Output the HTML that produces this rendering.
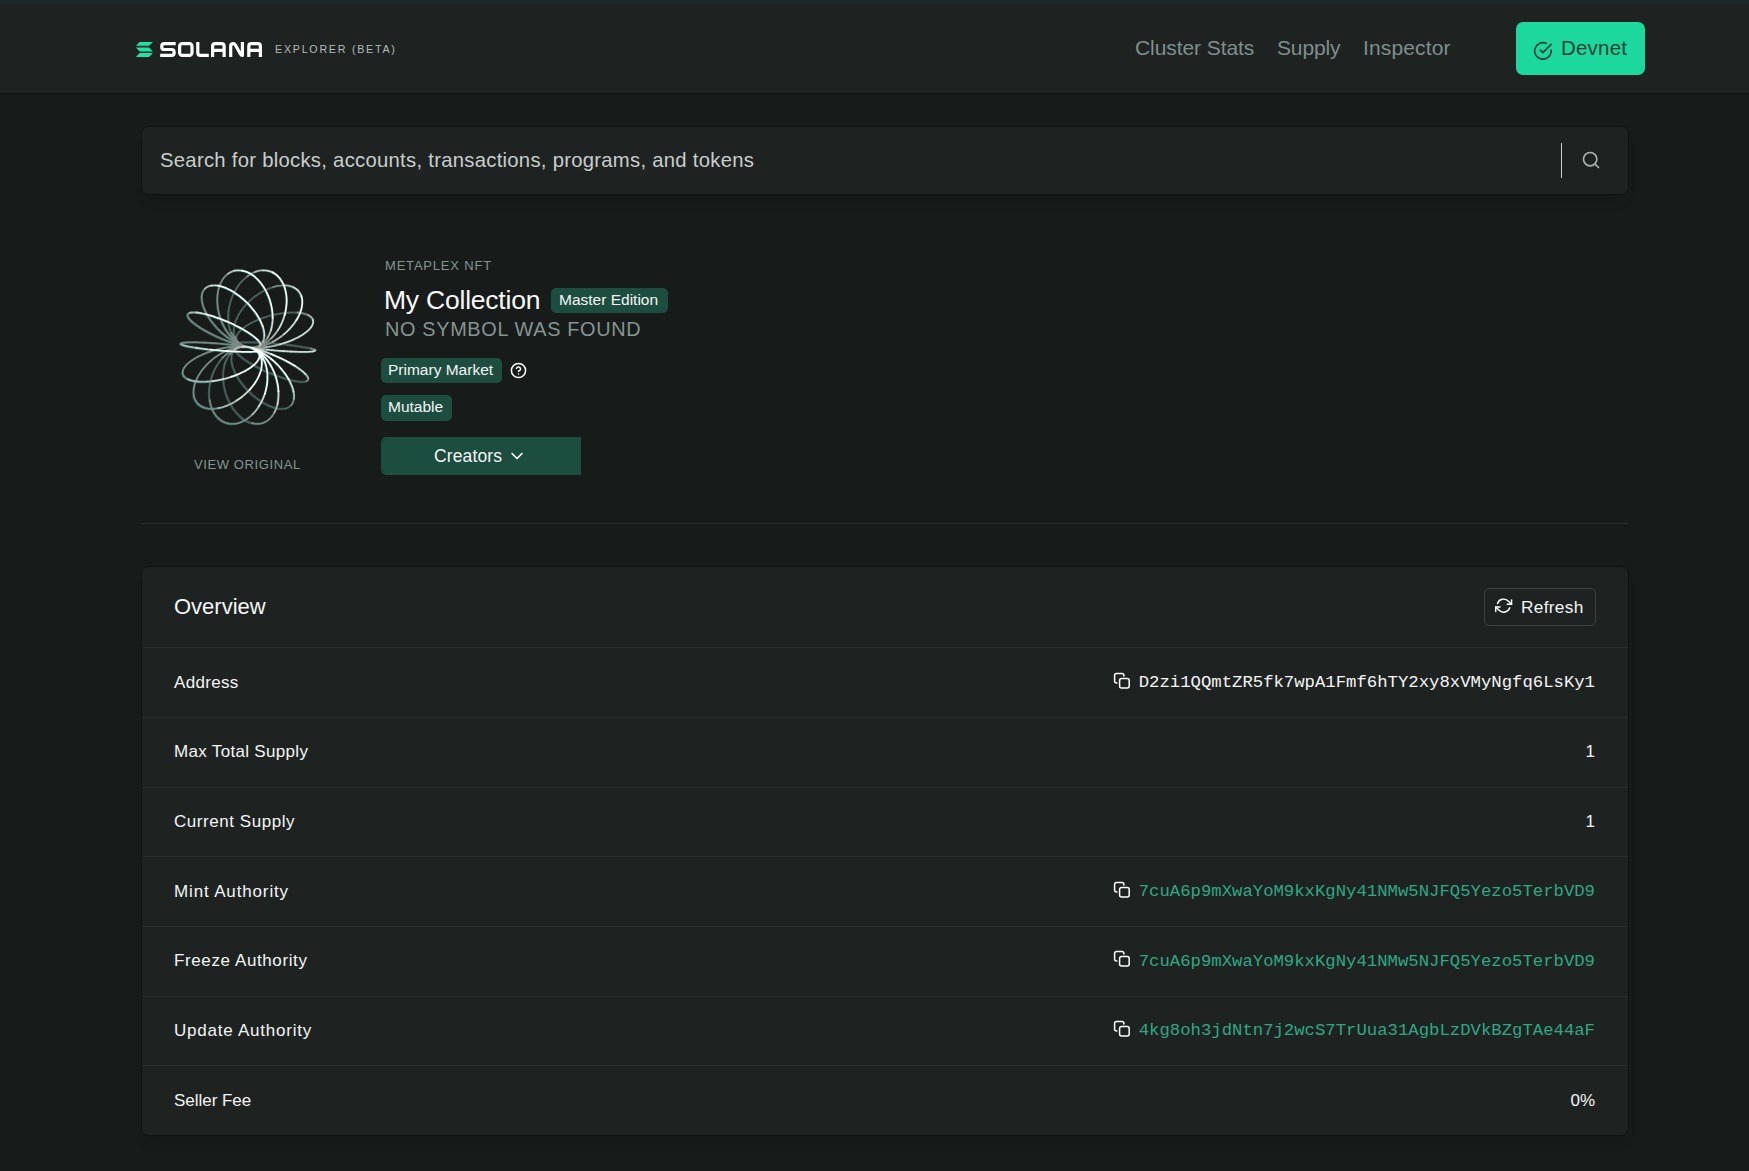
<!DOCTYPE html>
<html>
<head>
<meta charset="utf-8">
<style>
*{margin:0;padding:0;box-sizing:border-box}
html,body{width:1749px;height:1171px;overflow:hidden}
body{background:#171b1a;font-family:"Liberation Sans",sans-serif;color:#f4f5f4;position:relative}
.abs{position:absolute;white-space:nowrap;line-height:1}
#hdr{position:absolute;left:0;top:0;width:1749px;height:94px;background:#1e2322;border-bottom:1px solid #111413}
.nav{font-size:21px;color:#7f8f8b}
#devnet{position:absolute;left:1516px;top:22px;width:129px;height:53px;background:#1dd89c;border-radius:7px}
#search{position:absolute;left:141px;top:126px;width:1488px;height:69px;background:#1e2322;border:1px solid #101312;border-radius:7px;box-shadow:0 10px 14px -6px rgba(0,0,0,0.12)}
.muted{color:#859490}
.badge{position:absolute;background:#1c4d3f;border-radius:5px}
#card{position:absolute;left:141px;top:566px;width:1488px;height:570px;background:#1e2322;border:1px solid #101312;border-radius:8px;box-shadow:0 10px 14px -6px rgba(0,0,0,0.12)}
.rowb{position:absolute;left:142px;width:1486px;height:1px;background:#282e2c}
.lbl{font-size:17.5px;color:#f4f5f4}
.lbl2{font-size:17px}
.mono{font-family:"Liberation Mono",monospace;font-size:17.3px}
.grn{color:#2fa882}
</style>
</head>
<body>
<div id="hdr"></div>
<div class="abs" style="left:0;top:0;width:1749px;height:4px;background:#21282a"></div>
<!-- logo -->
<svg class="abs" style="left:130px;top:36px" width="140" height="26" viewBox="130 36 140 26">
  <g fill="#1ee3a2">
    <polygon points="139.7,41.9 152.9,41.9 149.1,45.8 135.9,45.8"/>
    <polygon points="135.9,47.4 149.1,47.4 152.9,51.6 139.7,51.6"/>
    <polygon points="139.7,52.9 152.9,52.9 149.1,57 135.9,57"/>
  </g>
  <g fill="none" stroke="#ffffff" stroke-width="3.2" stroke-linejoin="round">
    <!-- S -->
    <path d="M175.7,43.6 H164.3 Q161.8,43.6 161.8,46.1 V47.2 Q161.8,49.5 164.3,49.5 H171.6 Q174.1,49.5 174.1,52 V53 Q174.1,55.4 171.6,55.4 H160.2"/>
    <!-- O -->
    <rect x="179.6" y="43.6" width="12.4" height="11.8" rx="2.6"/>
    <!-- L -->
    <path d="M197.8,42 V52.8 Q197.8,55.4 200.4,55.4 H208.8"/>
    <!-- A -->
    <path d="M212.6,57 V46.2 Q212.6,43.6 215.2,43.6 H221.5 Q224.1,43.6 224.1,46.2 V57 M212.6,50.4 H224.1"/>
    <!-- N -->
    <path d="M230.7,57 V46.2 Q230.7,43.6 233.2,43.6 Q234.6,43.6 235.4,45 L240.4,54 Q241.2,55.4 242.4,55.4 V42"/>
    <!-- A -->
    <path d="M248.8,57 V46.2 Q248.8,43.6 251.4,43.6 H257.8 Q260.4,43.6 260.4,46.2 V57 M248.8,50.4 H260.4"/>
  </g>
</svg>
<div class="abs" style="left:275px;top:44px;font-size:10.7px;letter-spacing:1.75px;color:#b3bcb8">EXPLORER (BETA)</div>

<div class="abs nav" style="left:1135px;top:37px;letter-spacing:-0.08px">Cluster Stats</div>
<div class="abs nav" style="left:1277px;top:37px;letter-spacing:-0.15px">Supply</div>
<div class="abs nav" style="left:1363px;top:37px;letter-spacing:0.15px">Inspector</div>
<div id="devnet"></div>
<svg class="abs" style="left:1533.2px;top:40.6px" width="19.8" height="19.8" viewBox="0 0 24 24" fill="none" stroke="#1c3f35" stroke-width="2" stroke-linecap="round" stroke-linejoin="round"><path d="M22 11.08V12a10 10 0 1 1-5.93-9.14"/><polyline points="22 4 12 14.01 9 11.01"/></svg>
<div class="abs" style="left:1561px;top:37.6px;font-size:20.5px;letter-spacing:0.2px;color:#1c3f35">Devnet</div>

<!-- search -->
<div id="search"></div>
<div class="abs" style="left:160px;top:149.8px;font-size:20.3px;letter-spacing:0.27px;color:#c9cdcb">Search for blocks, accounts, transactions, programs, and tokens</div>
<div class="abs" style="left:1561px;top:143px;width:1px;height:35px;background:#c9cdcb"></div>
<svg class="abs" style="left:1581px;top:150px" width="20" height="20" viewBox="0 0 24 24" fill="none" stroke="#a9b1ad" stroke-width="2" stroke-linecap="round" stroke-linejoin="round"><circle cx="11" cy="11" r="8"/><line x1="21" y1="21" x2="16.65" y2="16.65"/></svg>

<!-- NFT header -->
<svg id="nftimg" class="abs" style="left:170px;top:260px" width="160" height="175" viewBox="0 0 160 175"><g fill="none" stroke-linecap="round"><path stroke="#26a08c" stroke-opacity="0.27" stroke-width="1.5" transform="translate(-0.7,0.7)" d="M93.8 82.6L96.4 82.8M96.4 82.8L99.1 83.0M99.1 83.0L101.8 83.2M101.8 83.2L104.5 83.4M104.5 83.4L107.3 83.6M107.3 83.6L110.0 83.9M110.0 83.9L112.7 84.1M112.7 84.1L115.4 84.4M115.4 84.4L118.1 84.7"/><path stroke="#26a08c" stroke-opacity="0.40" stroke-width="1.5" transform="translate(-0.7,0.7)" d="M97.5 115.4L97.3 112.8M97.3 112.8L97.0 110.3M97.0 110.3L96.6 107.9M96.6 107.9L96.0 105.5M96.0 105.5L95.3 103.2M95.3 103.2L94.4 101.1M94.4 101.1L93.4 99.1M93.4 99.1L92.3 97.1M92.3 97.1L91.1 95.4M91.1 95.4L89.8 93.8M89.8 93.8L88.4 92.3M88.4 92.3L86.8 91.0M86.8 91.0L85.2 89.8M85.2 89.8L83.5 88.8M83.5 88.8L81.7 88.0M81.7 88.0L79.9 87.4M79.9 87.4L78.0 87.0M78.0 87.0L76.1 86.8M107.5 123.4L106.9 120.7M106.9 120.7L106.2 118.0M106.2 118.0L105.3 115.4M105.3 115.4L104.4 112.8M104.4 112.8L103.3 110.3M103.3 110.3L102.1 107.9M102.1 107.9L100.8 105.5M100.8 105.5L99.4 103.2M99.4 103.2L97.9 101.1M97.9 101.1L96.4 99.1M96.4 99.1L94.7 97.1M94.7 97.1L93.0 95.4M93.0 95.4L91.3 93.8M91.3 93.8L89.4 92.3M89.4 92.3L87.6 91.0M87.6 91.0L85.7 89.8M85.7 89.8L83.8 88.8M83.8 88.8L81.9 88.0M81.9 88.0L79.9 87.4M79.9 87.4L78.0 87.0M78.0 87.0L76.1 86.8M76.1 86.8L74.2 86.7M74.2 86.7L72.3 86.8M54.9 104.1L54.3 106.4M54.3 106.4L53.9 108.8M53.9 108.8L53.5 111.3M53.5 111.3L53.3 113.8M53.3 113.8L53.3 116.4M53.3 116.4L53.4 119.0M53.4 119.0L53.6 121.7M53.6 121.7L53.9 124.4M53.9 124.4L54.4 127.1M54.4 127.1L55.0 129.8M55.0 129.8L55.7 132.4M55.7 132.4L56.5 135.0M56.5 135.0L57.5 137.6M57.5 137.6L58.6 140.1M58.6 140.1L59.8 142.6M59.8 142.6L61.1 144.9M61.1 144.9L62.5 147.2M62.5 147.2L64.0 149.3M64.0 149.3L65.5 151.4M65.5 151.4L67.2 153.3M67.2 153.3L68.9 155.1M68.9 155.1L70.6 156.7M70.6 156.7L72.4 158.2M107.8 148.3L109.7 148.6M109.7 148.6L111.5 148.7M111.5 148.7L113.2 148.6M113.2 148.6L114.8 148.4M114.8 148.4L116.3 148.1M119.9 121.4L118.7 119.3M118.7 119.3L117.4 117.1M117.4 117.1L116.0 114.9M116.0 114.9L114.4 112.8M114.4 112.8L112.8 110.7M112.8 110.7L111.1 108.6M111.1 108.6L109.3 106.5M109.3 106.5L107.4 104.5M107.4 104.5L105.4 102.6M105.4 102.6L103.4 100.7M103.4 100.7L101.3 99.0M101.3 99.0L99.2 97.3M99.2 97.3L97.0 95.7M97.0 95.7L94.8 94.2M94.8 94.2L92.7 92.9M92.7 92.9L90.5 91.6M90.5 91.6L88.3 90.5M88.3 90.5L86.2 89.5M86.2 89.5L84.0 88.7M84.0 88.7L82.0 88.0M62.0 95.0L61.8 96.5M61.8 96.5L61.6 98.1M61.6 98.1L61.6 99.9M61.6 99.9L61.8 101.7M61.8 101.7L62.1 103.6M62.1 103.6L62.6 105.5M62.6 105.5L63.2 107.6M63.2 107.6L64.0 109.6M64.0 109.6L64.9 111.7M64.9 111.7L65.9 113.9M65.9 113.9L67.1 116.0M67.1 116.0L68.4 118.2M68.4 118.2L69.8 120.4M69.8 120.4L71.3 122.5M71.3 122.5L73.0 124.6M73.0 124.6L74.7 126.7M74.7 126.7L76.5 128.8M76.5 128.8L78.4 130.8M78.4 130.8L80.4 132.7M80.4 132.7L82.4 134.6M82.4 134.6L84.5 136.3M84.5 136.3L86.6 138.0M86.6 138.0L88.8 139.6M88.8 139.6L90.9 141.1M90.9 141.1L93.1 142.4M93.1 142.4L95.3 143.7M95.3 143.7L97.5 144.8M97.5 144.8L99.6 145.8M99.6 145.8L101.7 146.6M101.7 146.6L103.8 147.3M103.8 147.3L105.8 147.9M105.8 147.9L107.8 148.3M125.8 121.0L127.6 121.3M127.6 121.3L129.4 121.5M129.4 121.5L131.0 121.7M131.0 121.7L132.4 121.7M132.4 121.7L133.7 121.7M133.7 121.7L134.9 121.5M134.9 121.5L135.9 121.3M135.9 121.3L136.7 121.0M136.7 121.0L137.4 120.6M137.4 120.6L137.9 120.2M137.9 120.2L138.2 119.6M138.2 119.6L138.3 119.0M138.3 119.0L138.3 118.3M138.3 118.3L138.0 117.5M138.0 117.5L137.6 116.7M137.6 116.7L137.1 115.8M137.1 115.8L136.3 114.9M136.3 114.9L135.4 113.9M135.4 113.9L134.3 112.8M134.3 112.8L133.1 111.7M133.1 111.7L131.7 110.6M131.7 110.6L130.2 109.4M130.2 109.4L128.5 108.3M128.5 108.3L126.7 107.1M126.7 107.1L124.8 105.8M124.8 105.8L122.8 104.6M122.8 104.6L120.7 103.4M120.7 103.4L118.4 102.1M118.4 102.1L116.1 100.9M116.1 100.9L113.8 99.7M113.8 99.7L111.3 98.5M111.3 98.5L108.9 97.4M108.9 97.4L106.3 96.2M106.3 96.2L103.8 95.1M65.5 89.0L65.5 89.7M65.5 89.7L65.7 90.5M65.7 90.5L66.1 91.3M66.1 91.3L66.7 92.2M66.7 92.2L67.4 93.1M67.4 93.1L68.3 94.1M68.3 94.1L69.4 95.2M69.4 95.2L70.6 96.3M70.6 96.3L72.0 97.4M72.0 97.4L73.6 98.6M73.6 98.6L75.2 99.8M75.2 99.8L77.0 101.0M77.0 101.0L78.9 102.2M78.9 102.2L81.0 103.4M81.0 103.4L83.1 104.7M83.1 104.7L85.3 105.9M85.3 105.9L87.6 107.1M87.6 107.1L90.0 108.3M90.0 108.3L92.4 109.5M92.4 109.5L94.9 110.7M94.9 110.7L97.4 111.8M97.4 111.8L100.0 112.9M100.0 112.9L102.5 113.9M102.5 113.9L105.0 114.9M105.0 114.9L107.6 115.9M107.6 115.9L110.1 116.7M110.1 116.7L112.5 117.6M112.5 117.6L114.9 118.3M114.9 118.3L117.3 119.0M117.3 119.0L119.5 119.6M119.5 119.6L121.7 120.2M121.7 120.2L123.8 120.6M123.8 120.6L125.8 121.0M134.3 87.0L136.1 87.3M136.1 87.3L137.8 87.7M137.8 87.7L139.4 88.0M139.4 88.0L140.8 88.3M140.8 88.3L142.0 88.7M142.0 88.7L143.0 89.0M143.0 89.0L143.9 89.3M143.9 89.3L144.6 89.6M144.6 89.6L145.1 89.9M145.1 89.9L145.4 90.1M145.4 90.1L145.5 90.4M145.5 90.4L145.4 90.6M145.4 90.6L145.1 90.8M145.1 90.8L144.7 91.0M144.7 91.0L144.0 91.2M144.0 91.2L143.2 91.4M143.2 91.4L142.2 91.5M142.2 91.5L141.0 91.6M141.0 91.6L139.6 91.7M139.6 91.7L138.1 91.8M138.1 91.8L136.4 91.8M136.4 91.8L134.6 91.8M134.6 91.8L132.7 91.8M132.7 91.8L130.6 91.8M130.6 91.8L128.3 91.8M128.3 91.8L126.0 91.7M66.9 83.4L67.1 83.2M67.1 83.2L67.6 83.0M67.6 83.0L68.3 82.8M68.3 82.8L69.1 82.6M69.1 82.6L70.1 82.5M70.1 82.5L71.3 82.4M71.3 82.4L72.6 82.3M72.6 82.3L74.2 82.2M74.2 82.2L75.8 82.2M75.8 82.2L77.7 82.2M77.7 82.2L79.6 82.2M79.6 82.2L81.7 82.2M81.7 82.2L83.9 82.2M83.9 82.2L86.3 82.3M86.3 82.3L88.7 82.4M88.7 82.4L91.2 82.5M91.2 82.5L93.8 82.6M118.1 84.7L120.7 85.0M120.7 85.0L123.2 85.3M123.2 85.3L125.6 85.7M125.6 85.7L128.0 86.0M128.0 86.0L130.2 86.3M130.2 86.3L132.3 86.7M132.3 86.7L134.3 87.0M131.7 53.0L133.5 53.4M133.5 53.4L135.2 53.8M135.2 53.8L136.8 54.4M136.8 54.4L138.2 55.0M138.2 55.0L139.5 55.7M139.5 55.7L140.5 56.4M140.5 56.4L141.4 57.3M141.4 57.3L142.2 58.1M142.2 58.1L142.7 59.1M142.7 59.1L143.1 60.1M143.1 60.1L143.2 61.1M143.2 61.1L143.2 62.2M143.2 62.2L143.0 63.3M143.0 63.3L142.6 64.5M142.6 64.5L142.1 65.7M142.1 65.7L141.3 66.9M141.3 66.9L140.4 68.1M140.4 68.1L139.3 69.3M139.3 69.3L138.0 70.6M138.0 70.6L136.6 71.8M136.6 71.8L135.0 73.0M135.0 73.0L133.3 74.2M133.3 74.2L131.4 75.4M66.6 76.6L67.0 75.5M67.0 75.5L67.6 74.3M67.6 74.3L68.3 73.1M68.3 73.1L69.3 71.9M69.3 71.9L70.4 70.6M70.4 70.6L71.7 69.4M71.7 69.4L73.1 68.2M73.1 68.2L74.7 66.9M74.7 66.9L76.4 65.7M76.4 65.7L78.3 64.6M78.3 64.6L80.3 63.4M80.3 63.4L82.4 62.3M82.4 62.3L84.6 61.2M84.6 61.2L87.0 60.1M87.0 60.1L89.4 59.1M89.4 59.1L91.9 58.2M91.9 58.2L94.4 57.3M94.4 57.3L97.0 56.5M97.0 56.5L99.7 55.7M99.7 55.7L102.3 55.0M102.3 55.0L105.0 54.4M105.0 54.4L107.7 53.8M107.7 53.8L110.4 53.4M110.4 53.4L113.0 53.0M113.0 53.0L115.6 52.7M115.6 52.7L118.2 52.5M118.2 52.5L120.6 52.3M120.6 52.3L123.0 52.3M123.0 52.3L125.4 52.3M125.4 52.3L127.6 52.5M127.6 52.5L129.7 52.7M129.7 52.7L131.7 53.0M118.4 25.7L120.3 26.1M120.3 26.1L122.0 26.7M122.0 26.7L123.7 27.4M123.7 27.4L125.2 28.2M125.2 28.2L126.6 29.2M126.6 29.2L127.9 30.3M127.9 30.3L129.0 31.6M129.0 31.6L129.9 32.9M129.9 32.9L130.7 34.4M130.7 34.4L131.4 36.0M131.4 36.0L131.9 37.7M131.9 37.7L132.2 39.4M132.2 39.4L132.3 41.3M132.3 41.3L132.3 43.2M132.3 43.2L132.1 45.2M132.1 45.2L131.8 47.3M131.8 47.3L131.3 49.4M131.3 49.4L130.6 51.5M130.6 51.5L129.8 53.6M129.8 53.6L128.8 55.8M128.8 55.8L127.7 58.0M64.1 69.5L64.3 67.5M64.3 67.5L64.6 65.4M64.6 65.4L65.1 63.3M65.1 63.3L65.8 61.2M65.8 61.2L66.6 59.1M66.6 59.1L67.6 56.9M67.6 56.9L68.7 54.7M68.7 54.7L70.0 52.6M70.0 52.6L71.4 50.4M71.4 50.4L73.0 48.3M73.0 48.3L74.6 46.3M74.6 46.3L76.4 44.2M76.4 44.2L78.3 42.3M78.3 42.3L80.3 40.4M80.3 40.4L82.3 38.6M82.3 38.6L84.5 36.8M84.5 36.8L86.7 35.2M86.7 35.2L89.0 33.7M89.0 33.7L91.3 32.2M91.3 32.2L93.6 30.9M93.6 30.9L96.0 29.8M96.0 29.8L98.4 28.7M98.4 28.7L100.8 27.8M100.8 27.8L103.1 27.0M103.1 27.0L105.5 26.4M105.5 26.4L107.8 25.9M107.8 25.9L110.1 25.6M110.1 25.6L112.3 25.4M112.3 25.4L114.4 25.3M114.4 25.3L116.4 25.4M116.4 25.4L118.4 25.7M97.2 10.6L99.1 11.0M99.1 11.0L100.9 11.6M100.9 11.6L102.7 12.4M102.7 12.4L104.4 13.4M104.4 13.4L106.0 14.5M106.0 14.5L107.5 15.8M107.5 15.8L109.0 17.3M109.0 17.3L110.3 18.9M110.3 18.9L111.5 20.7M111.5 20.7L112.6 22.6M112.6 22.6L113.6 24.7M113.6 24.7L114.4 26.8M114.4 26.8L115.2 29.1M115.2 29.1L115.7 31.4M115.7 31.4L116.2 33.9M116.2 33.9L116.5 36.4M116.5 36.4L116.7 39.0M116.7 39.0L116.7 41.6M116.7 41.6L116.6 44.2M58.8 50.6L59.2 48.0M59.2 48.0L59.8 45.3M59.8 45.3L60.4 42.6M60.4 42.6L61.2 40.0M61.2 40.0L62.2 37.4M62.2 37.4L63.2 34.8M63.2 34.8L64.4 32.4M64.4 32.4L65.7 30.0M87.2 11.2L89.2 10.7M89.2 10.7L91.2 10.4M91.2 10.4L93.2 10.3M93.2 10.3L95.2 10.3M95.2 10.3L97.2 10.6M81.7 14.5L83.6 15.8M83.6 15.8L85.4 17.3M85.4 17.3L87.1 18.9M87.1 18.9L88.8 20.7M88.8 20.7L90.5 22.6M90.5 22.6L92.0 24.7M92.0 24.7L93.5 26.8M93.5 26.8L94.9 29.1M94.9 29.1L96.2 31.4M96.2 31.4L97.4 33.9"/><path stroke="#26a08c" stroke-opacity="0.53" stroke-width="1.5" transform="translate(-0.7,0.7)" d="M64.8 91.5L67.3 91.6M67.3 91.6L69.7 91.7M69.7 91.7L72.1 91.8M72.1 91.8L74.3 91.8M74.3 91.8L76.4 91.8M76.4 91.8L78.3 91.8M78.3 91.8L80.2 91.8M80.2 91.8L81.8 91.8M81.8 91.8L83.4 91.7M83.4 91.7L84.7 91.6M84.7 91.6L85.9 91.5M85.9 91.5L86.9 91.4M86.9 91.4L87.7 91.2M87.7 91.2L88.4 91.0M88.4 91.0L88.9 90.8M88.9 90.8L89.1 90.6M89.1 90.6L89.2 90.4M89.2 90.4L89.1 90.1M89.1 90.1L88.8 89.9M88.8 89.9L88.3 89.6M88.3 89.6L87.6 89.3M87.6 89.3L86.8 89.0M86.8 89.0L85.7 88.7M85.7 88.7L84.5 88.3M84.5 88.3L83.1 88.0M83.1 88.0L81.6 87.7M81.6 87.7L79.9 87.3M79.9 87.3L78.0 87.0M78.0 87.0L76.0 86.7M76.0 86.7L73.9 86.3M73.9 86.3L71.7 86.0M71.7 86.0L69.3 85.7M69.3 85.7L66.9 85.3M66.9 85.3L64.4 85.0M64.4 85.0L61.8 84.7M61.8 84.7L59.1 84.4M59.1 84.4L56.5 84.1M56.5 84.1L53.7 83.9M53.7 83.9L51.0 83.6M51.0 83.6L48.2 83.4M48.2 83.4L45.5 83.2M45.5 83.2L42.8 83.0M42.8 83.0L40.1 82.8M40.1 82.8L37.5 82.6M37.5 82.6L34.9 82.5M34.9 82.5L32.4 82.4M32.4 82.4L30.0 82.3M30.0 82.3L27.7 82.2M27.7 82.2L25.4 82.2M25.4 82.2L23.3 82.2M23.3 82.2L21.4 82.2M21.4 82.2L19.6 82.2M19.6 82.2L17.9 82.2M71.4 112.8L73.6 111.7M73.6 111.7L75.7 110.6M75.7 110.6L77.7 109.4M77.7 109.4L79.6 108.3M79.6 108.3L81.3 107.1M81.3 107.1L82.9 105.8M82.9 105.8L84.3 104.6M84.3 104.6L85.6 103.4M85.6 103.4L86.7 102.1M86.7 102.1L87.7 100.9M87.7 100.9L88.4 99.7M88.4 99.7L89.0 98.5M89.0 98.5L89.4 97.4M89.4 97.4L89.6 96.2M89.6 96.2L89.6 95.1M89.6 95.1L89.4 94.1M89.4 94.1L89.0 93.1M89.0 93.1L88.5 92.2M88.5 92.2L87.8 91.3M87.8 91.3L86.9 90.4M86.9 90.4L85.8 89.7M85.8 89.7L84.5 89.0M84.5 89.0L83.1 88.4M83.1 88.4L81.6 87.8M81.6 87.8L79.9 87.4M79.9 87.4L78.0 87.0M78.0 87.0L76.0 86.7M76.0 86.7L73.9 86.5M73.9 86.5L71.7 86.4M71.7 86.4L69.4 86.3M69.4 86.3L67.0 86.4M67.0 86.4L64.5 86.5M64.5 86.5L61.9 86.7M61.9 86.7L59.3 87.0M59.3 87.0L56.7 87.4M56.7 87.4L54.0 87.9M54.0 87.9L51.4 88.4M51.4 88.4L48.7 89.0M48.7 89.0L46.0 89.7M46.0 89.7L43.4 90.5M43.4 90.5L40.8 91.3M40.8 91.3L38.2 92.2M38.2 92.2L35.7 93.1M35.7 93.1L33.3 94.1M33.3 94.1L31.0 95.2M31.0 95.2L28.7 96.3M28.7 96.3L26.6 97.4M26.6 97.4L24.6 98.6M24.6 98.6L22.7 99.8M22.7 99.8L21.0 101.0M21.0 101.0L19.4 102.2M19.4 102.2L18.0 103.4M18.0 103.4L16.7 104.7M16.7 104.7L15.6 105.9M77.7 131.7L79.6 129.8M79.6 129.8L81.4 127.7M81.4 127.7L83.0 125.7M83.0 125.7L84.6 123.6M84.6 123.6L86.0 121.4M86.0 121.4L87.3 119.3M87.3 119.3L88.4 117.1M88.4 117.1L89.4 114.9M89.4 114.9L90.2 112.8M90.2 112.8L90.9 110.7M90.9 110.7L91.4 108.6M91.4 108.6L91.7 106.5M91.7 106.5L91.9 104.5M91.9 104.5L91.9 102.6M91.9 102.6L91.8 100.7M91.8 100.7L91.4 99.0M91.4 99.0L91.0 97.3M91.0 97.3L90.3 95.7M90.3 95.7L89.5 94.2M89.5 94.2L88.5 92.9M88.5 92.9L87.4 91.6M87.4 91.6L86.2 90.5M86.2 90.5L84.8 89.5M84.8 89.5L83.3 88.7M83.3 88.7L81.6 88.0M81.6 88.0L79.9 87.4M79.9 87.4L78.0 87.0M78.0 87.0L76.0 86.7M76.0 86.7L74.0 86.6M74.0 86.6L71.8 86.7M71.8 86.7L69.6 86.9M69.6 86.9L67.4 87.2M67.4 87.2L65.1 87.7M65.1 87.7L62.7 88.3M62.7 88.3L60.4 89.1M60.4 89.1L58.0 90.0M58.0 90.0L55.6 91.1M55.6 91.1L53.2 92.2M53.2 92.2L50.9 93.5M50.9 93.5L48.6 95.0M48.6 95.0L46.3 96.5M46.3 96.5L44.1 98.1M44.1 98.1L41.9 99.9M41.9 99.9L39.9 101.7M39.9 101.7L37.9 103.6M37.9 103.6L36.0 105.5M36.0 105.5L34.2 107.6M34.2 107.6L32.5 109.6M32.5 109.6L31.0 111.7M31.0 111.7L29.6 113.9M29.6 113.9L28.3 116.0M28.3 116.0L27.2 118.2M27.2 118.2L26.2 120.4M26.2 120.4L25.4 122.5M25.4 122.5L24.7 124.6M24.7 124.6L24.2 126.7M24.2 126.7L23.9 128.8M23.9 128.8L23.7 130.8M23.7 130.8L23.7 132.7M23.7 132.7L23.8 134.6M23.8 134.6L24.1 136.3M88.9 146.3L90.3 144.0M90.3 144.0L91.6 141.6M91.6 141.6L92.8 139.2M92.8 139.2L93.8 136.6M93.8 136.6L94.8 134.0M94.8 134.0L95.6 131.4M95.6 131.4L96.2 128.7M96.2 128.7L96.8 126.0M96.8 126.0L97.2 123.4M97.2 123.4L97.4 120.7M97.4 120.7L97.5 118.0M97.5 118.0L97.5 115.4M76.1 86.8L74.1 86.7M74.1 86.7L72.1 86.8M72.1 86.8L70.0 87.1M70.0 87.1L68.0 87.6M68.0 87.6L66.0 88.3M66.0 88.3L64.0 89.2M64.0 89.2L62.0 90.2M62.0 90.2L60.0 91.4M60.0 91.4L58.1 92.8M58.1 92.8L56.2 94.4M56.2 94.4L54.4 96.0M54.4 96.0L52.6 97.9M52.6 97.9L51.0 99.8M51.0 99.8L49.4 101.9M49.4 101.9L47.9 104.1M47.9 104.1L46.5 106.4M46.5 106.4L45.2 108.8M45.2 108.8L44.0 111.3M44.0 111.3L43.0 113.8M43.0 113.8L42.1 116.4M42.1 116.4L41.3 119.0M41.3 119.0L40.6 121.7M40.6 121.7L40.1 124.4M40.1 124.4L39.7 127.1M39.7 127.1L39.4 129.8M39.4 129.8L39.3 132.4M39.3 132.4L39.3 135.0M39.3 135.0L39.5 137.6M39.5 137.6L39.8 140.1M39.8 140.1L40.3 142.6M40.3 142.6L40.8 144.9M40.8 144.9L41.6 147.2M41.6 147.2L42.4 149.3M42.4 149.3L43.4 151.4M43.4 151.4L44.5 153.3M44.5 153.3L45.7 155.1M45.7 155.1L47.0 156.7M47.0 156.7L48.5 158.2M48.5 158.2L50.0 159.5M50.0 159.5L51.6 160.6M51.6 160.6L53.3 161.6M53.3 161.6L55.1 162.4M55.1 162.4L56.9 163.0M56.9 163.0L58.8 163.4M83.9 163.4L85.8 163.7M85.8 163.7L87.7 163.7M87.7 163.7L89.5 163.6M89.5 163.6L91.4 163.3M91.4 163.3L93.1 162.8M93.1 162.8L94.8 162.1M94.8 162.1L96.5 161.2M96.5 161.2L98.0 160.2M98.0 160.2L99.5 159.0M99.5 159.0L100.9 157.6M100.9 157.6L102.2 156.1M102.2 156.1L103.4 154.4M103.4 154.4L104.4 152.6M104.4 152.6L105.4 150.6M105.4 150.6L106.2 148.5M106.2 148.5L107.0 146.3M107.0 146.3L107.6 144.0M107.6 144.0L108.0 141.6M108.0 141.6L108.3 139.2M108.3 139.2L108.5 136.6M108.5 136.6L108.6 134.0M108.6 134.0L108.5 131.4M108.5 131.4L108.3 128.7M108.3 128.7L108.0 126.0M108.0 126.0L107.5 123.4M72.3 86.8L70.5 87.1M70.5 87.1L68.8 87.6M68.8 87.6L67.1 88.3M67.1 88.3L65.4 89.2M65.4 89.2L63.9 90.2M63.9 90.2L62.4 91.4M62.4 91.4L61.0 92.8M61.0 92.8L59.7 94.4M59.7 94.4L58.5 96.0M58.5 96.0L57.5 97.9M57.5 97.9L56.5 99.8M56.5 99.8L55.7 101.9M55.7 101.9L54.9 104.1M72.4 158.2L74.3 159.5M74.3 159.5L76.2 160.6M76.2 160.6L78.1 161.6M78.1 161.6L80.0 162.4M80.0 162.4L82.0 163.0M82.0 163.0L83.9 163.4M116.3 148.1L117.7 147.6M117.7 147.6L118.9 147.0M118.9 147.0L120.1 146.2M120.1 146.2L121.1 145.3M121.1 145.3L122.0 144.2M122.0 144.2L122.7 143.1M122.7 143.1L123.3 141.8M123.3 141.8L123.7 140.3M123.7 140.3L124.0 138.8M124.0 138.8L124.2 137.2M124.2 137.2L124.1 135.4M124.1 135.4L124.0 133.6M124.0 133.6L123.6 131.7M123.6 131.7L123.2 129.8M123.2 129.8L122.6 127.7M122.6 127.7L121.8 125.7M121.8 125.7L120.9 123.6M120.9 123.6L119.9 121.4M82.0 88.0L80.0 87.4M80.0 87.4L78.0 87.0M78.0 87.0L76.1 86.7M76.1 86.7L74.3 86.6M74.3 86.6L72.6 86.7M72.6 86.7L71.0 86.9M71.0 86.9L69.5 87.2M69.5 87.2L68.1 87.7M68.1 87.7L66.8 88.3M66.8 88.3L65.7 89.1M65.7 89.1L64.7 90.0M64.7 90.0L63.8 91.1M63.8 91.1L63.1 92.2M63.1 92.2L62.5 93.5M62.5 93.5L62.0 95.0M103.8 95.1L101.3 94.1M101.3 94.1L98.7 93.1M98.7 93.1L96.2 92.2M96.2 92.2L93.7 91.3M93.7 91.3L91.3 90.4M91.3 90.4L88.8 89.7M88.8 89.7L86.5 89.0M86.5 89.0L84.2 88.4M84.2 88.4L82.1 87.8M82.1 87.8L80.0 87.4M80.0 87.4L78.0 87.0M78.0 87.0L76.1 86.7M76.1 86.7L74.4 86.5M74.4 86.5L72.8 86.4M72.8 86.4L71.3 86.3M71.3 86.3L70.0 86.4M70.0 86.4L68.9 86.5M68.9 86.5L67.9 86.7M67.9 86.7L67.1 87.0M67.1 87.0L66.4 87.4M66.4 87.4L65.9 87.9M65.9 87.9L65.6 88.4M65.6 88.4L65.5 89.0M126.0 91.7L123.6 91.6M123.6 91.6L121.1 91.5M121.1 91.5L118.5 91.4M118.5 91.4L115.9 91.2M115.9 91.2L113.2 91.0M113.2 91.0L110.5 90.8M110.5 90.8L107.8 90.6M107.8 90.6L105.0 90.4M105.0 90.4L102.3 90.1M102.3 90.1L99.5 89.9M99.5 89.9L96.9 89.6M96.9 89.6L94.2 89.3M94.2 89.3L91.6 89.0M91.6 89.0L89.1 88.7M89.1 88.7L86.7 88.3M86.7 88.3L84.3 88.0M84.3 88.0L82.1 87.7M82.1 87.7L80.0 87.3M80.0 87.3L78.0 87.0M78.0 87.0L76.1 86.7M76.1 86.7L74.4 86.3M74.4 86.3L72.9 86.0M72.9 86.0L71.5 85.7M71.5 85.7L70.3 85.3M70.3 85.3L69.2 85.0M69.2 85.0L68.4 84.7M68.4 84.7L67.7 84.4M67.7 84.4L67.2 84.1M67.2 84.1L66.9 83.9M66.9 83.9L66.8 83.6M66.8 83.6L66.9 83.4M131.4 75.4L129.4 76.6M129.4 76.6L127.3 77.7M127.3 77.7L125.0 78.8M125.0 78.8L122.7 79.9M122.7 79.9L120.3 80.9M120.3 80.9L117.8 81.8M117.8 81.8L115.2 82.7M115.2 82.7L112.6 83.5M112.6 83.5L110.0 84.3M110.0 84.3L107.3 85.0M107.3 85.0L104.6 85.6M104.6 85.6L102.0 86.1M102.0 86.1L99.3 86.6M99.3 86.6L96.7 87.0M96.7 87.0L94.1 87.3M94.1 87.3L91.5 87.5M84.3 87.6L82.1 87.5M82.1 87.5L80.0 87.3M80.0 87.3L78.0 87.0M78.0 87.0L76.1 86.6M76.1 86.6L74.4 86.2M74.4 86.2L72.9 85.6M72.9 85.6L71.5 85.0M71.5 85.0L70.2 84.3M70.2 84.3L69.1 83.6M69.1 83.6L68.2 82.7M68.2 82.7L67.5 81.8M67.5 81.8L67.0 80.9M67.0 80.9L66.6 79.9M66.6 79.9L66.4 78.9M66.4 78.9L66.4 77.8M66.4 77.8L66.6 76.6M127.7 58.0L126.4 60.1M126.4 60.1L125.0 62.3M125.0 62.3L123.5 64.4M123.5 64.4L121.8 66.4M121.8 66.4L120.0 68.5M120.0 68.5L118.1 70.4M118.1 70.4L116.1 72.3M116.1 72.3L114.1 74.1M114.1 74.1L111.9 75.9M111.9 75.9L109.7 77.5M109.7 77.5L107.4 79.0M107.4 79.0L105.1 80.5M84.2 87.3L82.0 87.4M82.0 87.4L80.0 87.3M80.0 87.3L78.0 87.0M78.0 87.0L76.1 86.6M76.1 86.6L74.4 86.0M74.4 86.0L72.7 85.3M72.7 85.3L71.2 84.5M71.2 84.5L69.8 83.5M69.8 83.5L68.6 82.4M68.6 82.4L67.5 81.1M67.5 81.1L66.5 79.8M66.5 79.8L65.7 78.3M65.7 78.3L65.0 76.7M65.0 76.7L64.6 75.0M64.6 75.0L64.2 73.3M64.2 73.3L64.1 71.4M64.1 71.4L64.1 69.5M116.6 44.2L116.3 46.9M116.3 46.9L115.9 49.6M115.9 49.6L115.4 52.3M115.4 52.3L114.7 55.0M114.7 55.0L113.9 57.6M113.9 57.6L113.0 60.2M113.0 60.2L112.0 62.7M112.0 62.7L110.8 65.2M110.8 65.2L109.5 67.6M109.5 67.6L108.1 69.9M108.1 69.9L106.6 72.1M83.9 87.2L81.9 87.3M81.9 87.3L79.9 87.2M79.9 87.2L78.0 87.0M78.0 87.0L76.1 86.6M76.1 86.6L74.3 86.0M74.3 86.0L72.5 85.2M72.5 85.2L70.8 84.2M70.8 84.2L69.2 83.0M69.2 83.0L67.6 81.7M67.6 81.7L66.2 80.2M66.2 80.2L64.9 78.6M64.9 78.6L63.7 76.9M63.7 76.9L62.6 74.9M62.6 74.9L61.6 72.9M61.6 72.9L60.7 70.8M60.7 70.8L60.0 68.5M60.0 68.5L59.4 66.1M59.4 66.1L59.0 63.7M59.0 63.7L58.7 61.2M58.7 61.2L58.5 58.6M58.5 58.6L58.5 56.0M58.5 56.0L58.6 53.3M58.6 53.3L58.8 50.6M65.7 30.0L67.1 27.7M67.1 27.7L68.5 25.5M68.5 25.5L70.1 23.4M70.1 23.4L71.8 21.4M71.8 21.4L73.5 19.6M73.5 19.6L75.4 17.9M75.4 17.9L77.2 16.4M77.2 16.4L79.2 15.0M79.2 15.0L81.1 13.8M81.1 13.8L83.1 12.8M83.1 12.8L85.1 11.9M85.1 11.9L87.2 11.2M72.1 10.6L74.0 11.0M74.0 11.0L76.0 11.6M76.0 11.6L77.9 12.4M77.9 12.4L79.8 13.4M79.8 13.4L81.7 14.5M97.4 33.9L98.5 36.4M98.5 36.4L99.5 39.0M99.5 39.0L100.3 41.6M100.3 41.6L101.0 44.2M101.0 44.2L101.6 46.9M101.6 46.9L102.1 49.6M102.1 49.6L102.4 52.3M102.4 52.3L102.6 55.0M102.6 55.0L102.7 57.6M102.7 57.6L102.7 60.2M102.7 60.2L102.5 62.7M102.5 62.7L102.1 65.2M102.1 65.2L101.7 67.6M83.7 87.2L81.8 87.3M81.8 87.3L79.9 87.2M79.9 87.2L78.0 87.0M78.0 87.0L76.1 86.6M76.1 86.6L74.1 86.0M74.1 86.0L72.2 85.2M72.2 85.2L70.3 84.2M70.3 84.2L68.4 83.0M68.4 83.0L66.6 81.7M66.6 81.7L64.7 80.2M64.7 80.2L63.0 78.6M63.0 78.6L61.3 76.9M61.3 76.9L59.6 74.9M59.6 74.9L58.1 72.9M58.1 72.9L56.6 70.8M56.6 70.8L55.2 68.5M55.2 68.5L53.9 66.1M53.9 66.1L52.7 63.7M52.7 63.7L51.6 61.2M51.6 61.2L50.7 58.6M50.7 58.6L49.8 56.0M49.8 56.0L49.1 53.3M49.1 53.3L48.5 50.6M48.5 50.6L48.0 48.0M48.0 48.0L47.7 45.3M47.7 45.3L47.5 42.6M47.5 42.6L47.4 40.0M47.4 40.0L47.5 37.4M47.5 37.4L47.7 34.8M47.7 34.8L48.0 32.4M48.0 32.4L48.4 30.0M48.4 30.0L49.0 27.7M49.0 27.7L49.8 25.5M49.8 25.5L50.6 23.4M50.6 23.4L51.6 21.4M51.6 21.4L52.6 19.6M52.6 19.6L53.8 17.9M53.8 17.9L55.1 16.4M55.1 16.4L56.5 15.0M56.5 15.0L58.0 13.8M58.0 13.8L59.5 12.8M59.5 12.8L61.2 11.9M61.2 11.9L62.9 11.2M62.9 11.2L64.6 10.7M64.6 10.7L66.5 10.4M66.5 10.4L68.3 10.3M68.3 10.3L70.2 10.3M70.2 10.3L72.1 10.6M48.2 25.7L50.2 26.1M50.2 26.1L52.2 26.7M52.2 26.7L54.3 27.4M54.3 27.4L56.4 28.2M56.4 28.2L58.5 29.2M58.5 29.2L60.7 30.3M60.7 30.3L62.9 31.6M62.9 31.6L65.1 32.9M65.1 32.9L67.2 34.4M67.2 34.4L69.4 36.0M69.4 36.0L71.5 37.7M71.5 37.7L73.6 39.4M73.6 39.4L75.6 41.3M75.6 41.3L77.6 43.2M77.6 43.2L79.5 45.2M79.5 45.2L81.3 47.3M81.3 47.3L83.0 49.4M83.0 49.4L84.7 51.5M84.7 51.5L86.2 53.6M86.2 53.6L87.6 55.8M87.6 55.8L88.9 58.0M88.9 58.0L90.1 60.1M90.1 60.1L91.1 62.3M91.1 62.3L92.0 64.4M92.0 64.4L92.8 66.4M92.8 66.4L93.4 68.5M93.4 68.5L93.9 70.4M83.4 87.3L81.7 87.4M81.7 87.4L79.9 87.3M79.9 87.3L78.0 87.0M78.0 87.0L76.0 86.6M76.0 86.6L74.0 86.0M74.0 86.0L72.0 85.3M72.0 85.3L69.8 84.5M69.8 84.5L67.7 83.5M67.7 83.5L65.5 82.4M65.5 82.4L63.3 81.1M63.3 81.1L61.2 79.8M61.2 79.8L59.0 78.3M59.0 78.3L56.8 76.7M56.8 76.7L54.7 75.0M54.7 75.0L52.6 73.3M52.6 73.3L50.6 71.4M50.6 71.4L48.6 69.5M48.6 69.5L46.7 67.5M46.7 67.5L44.9 65.4M44.9 65.4L43.2 63.3M43.2 63.3L41.6 61.2M41.6 61.2L40.0 59.1M40.0 59.1L38.6 56.9M38.6 56.9L37.3 54.7M37.3 54.7L36.1 52.6M36.1 52.6L35.1 50.4M35.1 50.4L34.2 48.3M34.2 48.3L33.4 46.3M33.4 46.3L32.8 44.2M32.8 44.2L32.4 42.3M32.4 42.3L32.0 40.4M32.0 40.4L31.9 38.6M31.9 38.6L31.8 36.8M42.8 25.4L44.5 25.3M44.5 25.3L46.3 25.4M46.3 25.4L48.2 25.7M48.4 58.1L51.0 59.1M51.0 59.1L53.5 60.1M53.5 60.1L56.0 61.1M56.0 61.1L58.6 62.2M58.6 62.2L61.1 63.3M61.1 63.3L63.6 64.5M63.6 64.5L66.0 65.7M66.0 65.7L68.4 66.9M68.4 66.9L70.7 68.1M70.7 68.1L72.9 69.3M72.9 69.3L75.0 70.6M75.0 70.6L77.1 71.8M77.1 71.8L79.0 73.0M79.0 73.0L80.8 74.2M80.8 74.2L82.4 75.4M82.4 75.4L84.0 76.6M84.0 76.6L85.4 77.7M85.4 77.7L86.6 78.8M86.6 78.8L87.7 79.9M87.7 79.9L88.6 80.9M88.6 80.9L89.3 81.8M83.2 87.6L81.6 87.5M81.6 87.5L79.9 87.3M79.9 87.3L78.0 87.0M78.0 87.0L76.0 86.6M76.0 86.6L73.9 86.2M73.9 86.2L71.8 85.6M71.8 85.6L69.5 85.0M69.5 85.0L67.2 84.3M67.2 84.3L64.7 83.6M64.7 83.6L62.3 82.7M62.3 82.7L59.8 81.8M59.8 81.8L57.3 80.9M57.3 80.9L54.7 79.9M54.7 79.9L52.2 78.9M52.2 78.9L49.7 77.8M49.7 77.8L47.1 76.6M47.1 76.6L44.7 75.5M44.7 75.5L42.2 74.3M42.2 74.3L39.9 73.1M39.9 73.1L37.6 71.9M37.6 71.9L35.3 70.6M35.3 70.6L33.2 69.4M33.2 69.4L31.2 68.2M31.2 68.2L29.3 66.9M29.3 66.9L27.5 65.7M27.5 65.7L25.8 64.6M25.8 64.6L24.3 63.4M24.3 63.4L22.9 62.3M22.9 62.3L21.7 61.2"/><path stroke="#26a08c" stroke-opacity="0.67" stroke-width="1.5" transform="translate(-0.7,0.7)" d="M28.0 88.0L30.4 88.3M30.4 88.3L32.8 88.7M32.8 88.7L35.3 89.0M35.3 89.0L37.9 89.3M37.9 89.3L40.6 89.6M40.6 89.6L43.3 89.9M43.3 89.9L46.0 90.1M46.0 90.1L48.7 90.4M48.7 90.4L51.5 90.6M51.5 90.6L54.2 90.8M54.2 90.8L56.9 91.0M56.9 91.0L59.6 91.2M59.6 91.2L62.2 91.4M62.2 91.4L64.8 91.5M17.9 82.2L16.4 82.3M16.4 82.3L15.0 82.4M15.0 82.4L13.8 82.5M13.8 82.5L12.8 82.6M12.8 82.6L12.0 82.8M12.0 82.8L11.3 83.0M11.3 83.0L10.9 83.2M10.9 83.2L10.6 83.4M10.6 83.4L10.5 83.6M10.5 83.6L10.6 83.9M10.6 83.9L10.9 84.1M10.9 84.1L11.4 84.4M11.4 84.4L12.1 84.7M12.1 84.7L13.0 85.0M45.6 120.6L48.3 120.2M48.3 120.2L51.0 119.6M51.0 119.6L53.7 119.0M53.7 119.0L56.3 118.3M56.3 118.3L59.0 117.5M59.0 117.5L61.6 116.7M61.6 116.7L64.1 115.8M64.1 115.8L66.6 114.9M66.6 114.9L69.0 113.9M69.0 113.9L71.4 112.8M15.6 105.9L14.7 107.1M14.7 107.1L13.9 108.3M13.9 108.3L13.4 109.5M13.4 109.5L13.0 110.7M13.0 110.7L12.8 111.8M12.8 111.8L12.8 112.9M12.8 112.9L12.9 113.9M12.9 113.9L13.3 114.9M13.3 114.9L13.8 115.9M13.8 115.9L14.6 116.7M14.6 116.7L15.5 117.6M15.5 117.6L16.5 118.3M16.5 118.3L17.8 119.0M17.8 119.0L19.2 119.6M37.6 148.3L39.6 148.6M39.6 148.6L41.6 148.7M41.6 148.7L43.7 148.6M43.7 148.6L45.9 148.4M45.9 148.4L48.2 148.1M48.2 148.1L50.5 147.6M50.5 147.6L52.9 147.0M57.6 145.3L60.0 144.2M60.0 144.2L62.4 143.1M62.4 143.1L64.7 141.8M64.7 141.8L67.0 140.3M67.0 140.3L69.3 138.8M69.3 138.8L71.5 137.2M71.5 137.2L73.7 135.4M73.7 135.4L75.7 133.6M75.7 133.6L77.7 131.7M24.1 136.3L24.6 138.0M24.6 138.0L25.3 139.6M25.3 139.6L26.1 141.1M26.1 141.1L27.0 142.4M27.0 142.4L28.1 143.7M28.1 143.7L29.4 144.8M29.4 144.8L30.8 145.8M30.8 145.8L32.3 146.6M32.3 146.6L34.0 147.3M34.0 147.3L35.7 147.9M35.7 147.9L37.6 148.3M58.8 163.4L60.8 163.7M60.8 163.7L62.8 163.7M62.8 163.7L64.8 163.6M64.8 163.6L66.8 163.3M66.8 163.3L68.8 162.8M68.8 162.8L70.9 162.1M70.9 162.1L72.9 161.2M72.9 161.2L74.9 160.2M74.9 160.2L76.8 159.0M76.8 159.0L78.8 157.6M78.8 157.6L80.6 156.1M80.6 156.1L82.5 154.4M82.5 154.4L84.2 152.6M84.2 152.6L85.9 150.6M85.9 150.6L87.5 148.5M87.5 148.5L88.9 146.3M91.5 87.5L89.0 87.6M89.0 87.6L86.6 87.7M86.6 87.7L84.3 87.6M105.1 80.5L102.8 81.8M102.8 81.8L100.4 82.9M100.4 82.9L98.0 84.0M98.0 84.0L95.6 84.9M95.6 84.9L93.3 85.7M93.3 85.7L90.9 86.3M90.9 86.3L88.6 86.8M88.6 86.8L86.4 87.1M86.4 87.1L84.2 87.3M106.6 72.1L105.0 74.2M105.0 74.2L103.4 76.1M103.4 76.1L101.6 78.0M101.6 78.0L99.8 79.6M99.8 79.6L97.9 81.2M97.9 81.2L96.0 82.6M96.0 82.6L94.0 83.8M94.0 83.8L92.0 84.8M92.0 84.8L90.0 85.7M90.0 85.7L88.0 86.4M88.0 86.4L86.0 86.9M86.0 86.9L83.9 87.2M101.7 67.6L101.1 69.9M101.1 69.9L100.3 72.1M100.3 72.1L99.5 74.2M99.5 74.2L98.5 76.1M98.5 76.1L97.5 78.0M97.5 78.0L96.3 79.6M96.3 79.6L95.0 81.2M95.0 81.2L93.6 82.6M93.6 82.6L92.1 83.8M92.1 83.8L90.6 84.8M90.6 84.8L88.9 85.7M88.9 85.7L87.2 86.4M87.2 86.4L85.5 86.9M85.5 86.9L83.7 87.2M93.9 70.4L94.2 72.3M94.2 72.3L94.4 74.1M94.4 74.1L94.4 75.9M94.4 75.9L94.2 77.5M94.2 77.5L94.0 79.0M94.0 79.0L93.5 80.5M93.5 80.5L92.9 81.8M92.9 81.8L92.2 82.9M92.2 82.9L91.3 84.0M91.3 84.0L90.3 84.9M90.3 84.9L89.2 85.7M89.2 85.7L87.9 86.3M87.9 86.3L86.5 86.8M86.5 86.8L85.0 87.1M85.0 87.1L83.4 87.3M31.8 36.8L32.0 35.2M32.0 35.2L32.3 33.7M32.3 33.7L32.7 32.2M32.7 32.2L33.3 30.9M33.3 30.9L34.0 29.8M34.0 29.8L34.9 28.7M34.9 28.7L35.9 27.8M35.9 27.8L37.1 27.0M37.1 27.0L38.3 26.4M38.3 26.4L39.7 25.9M39.7 25.9L41.2 25.6M41.2 25.6L42.8 25.4M30.2 53.0L32.2 53.4M32.2 53.4L34.3 53.8M34.3 53.8L36.5 54.4M36.5 54.4L38.7 55.0M38.7 55.0L41.1 55.7M41.1 55.7L43.5 56.4M43.5 56.4L45.9 57.3M45.9 57.3L48.4 58.1M89.3 81.8L89.9 82.7M89.9 82.7L90.3 83.5M90.3 83.5L90.5 84.3M90.5 84.3L90.5 85.0M90.5 85.0L90.4 85.6M90.4 85.6L90.1 86.1M90.1 86.1L89.6 86.6M89.6 86.6L88.9 87.0M88.9 87.0L88.1 87.3M88.1 87.3L87.1 87.5M87.1 87.5L86.0 87.6M86.0 87.6L84.7 87.7M84.7 87.7L83.2 87.6M21.7 61.2L20.6 60.1M20.6 60.1L19.7 59.1M19.7 59.1L18.9 58.2M18.9 58.2L18.4 57.3M18.4 57.3L18.0 56.5M18.0 56.5L17.7 55.7M17.7 55.7L17.7 55.0M17.7 55.0L17.8 54.4M17.8 54.4L18.1 53.8M18.1 53.8L18.6 53.4M18.6 53.4L19.3 53.0M19.3 53.0L20.1 52.7M20.1 52.7L21.1 52.5M21.1 52.5L22.3 52.3M22.3 52.3L23.6 52.3M23.6 52.3L25.0 52.3M25.0 52.3L26.6 52.5M26.6 52.5L28.4 52.7M28.4 52.7L30.2 53.0"/><path stroke="#26a08c" stroke-opacity="0.80" stroke-width="1.5" transform="translate(-0.7,0.7)" d="M21.7 87.0L23.7 87.3M23.7 87.3L25.8 87.7M25.8 87.7L28.0 88.0M13.0 85.0L14.0 85.3M14.0 85.3L15.2 85.7M15.2 85.7L16.6 86.0M16.6 86.0L18.2 86.3M18.2 86.3L19.9 86.7M19.9 86.7L21.7 87.0M24.3 121.0L26.3 121.3M26.3 121.3L28.4 121.5M28.4 121.5L30.6 121.7M30.6 121.7L33.0 121.7M33.0 121.7L35.4 121.7M35.4 121.7L37.8 121.5M37.8 121.5L40.4 121.3M40.4 121.3L43.0 121.0M43.0 121.0L45.6 120.6M19.2 119.6L20.8 120.2M20.8 120.2L22.5 120.6M22.5 120.6L24.3 121.0M52.9 147.0L55.2 146.2M55.2 146.2L57.6 145.3"/><path stroke="#656b68" stroke-opacity="0.67" stroke-width="1.8" d="M52.6 97.9L51.0 99.8M51.0 99.8L49.4 101.9M49.4 101.9L47.9 104.1M47.9 104.1L46.5 106.4M46.5 106.4L45.2 108.8M45.2 108.8L44.0 111.3M44.0 111.3L43.0 113.8M43.0 113.8L42.1 116.4M42.1 116.4L41.3 119.0M41.3 119.0L40.6 121.7M40.6 121.7L40.1 124.4M40.1 124.4L39.7 127.1M39.7 127.1L39.4 129.8M39.4 129.8L39.3 132.4M39.3 132.4L39.3 135.0M39.3 135.0L39.5 137.6M39.5 137.6L39.8 140.1M59.7 94.4L58.5 96.0M58.5 96.0L57.5 97.9M57.5 97.9L56.5 99.8M56.5 99.8L55.7 101.9M55.7 101.9L54.9 104.1M54.9 104.1L54.3 106.4M54.3 106.4L53.9 108.8M53.9 108.8L53.5 111.3M53.5 111.3L53.3 113.8M53.3 113.8L53.3 116.4M53.3 116.4L53.4 119.0M53.4 119.0L53.6 121.7M53.6 121.7L53.9 124.4M53.9 124.4L54.4 127.1M54.4 127.1L55.0 129.8M55.0 129.8L55.7 132.4M55.7 132.4L56.5 135.0M56.5 135.0L57.5 137.6M57.5 137.6L58.6 140.1M58.6 140.1L59.8 142.6M59.8 142.6L61.1 144.9M61.1 144.9L62.5 147.2M62.5 147.2L64.0 149.3M64.0 149.3L65.5 151.4M65.5 151.4L67.2 153.3M67.2 153.3L68.9 155.1M68.9 155.1L70.6 156.7M70.6 156.7L72.4 158.2M72.4 158.2L74.3 159.5M74.3 159.5L76.2 160.6M76.2 160.6L78.1 161.6M78.1 161.6L80.0 162.4M80.0 162.4L82.0 163.0M107.8 148.3L109.7 148.6M109.7 148.6L111.5 148.7M111.5 148.7L113.2 148.6M113.2 148.6L114.8 148.4M114.8 148.4L116.3 148.1M116.3 148.1L117.7 147.6M117.7 147.6L118.9 147.0M118.9 147.0L120.1 146.2M120.1 146.2L121.1 145.3M63.8 91.1L63.1 92.2M63.1 92.2L62.5 93.5M62.5 93.5L62.0 95.0M62.0 95.0L61.8 96.5M61.8 96.5L61.6 98.1M61.6 98.1L61.6 99.9M61.6 99.9L61.8 101.7M61.8 101.7L62.1 103.6M62.1 103.6L62.6 105.5M62.6 105.5L63.2 107.6M63.2 107.6L64.0 109.6M64.0 109.6L64.9 111.7M64.9 111.7L65.9 113.9M65.9 113.9L67.1 116.0M67.1 116.0L68.4 118.2M68.4 118.2L69.8 120.4M69.8 120.4L71.3 122.5M71.3 122.5L73.0 124.6M73.0 124.6L74.7 126.7M74.7 126.7L76.5 128.8M76.5 128.8L78.4 130.8M78.4 130.8L80.4 132.7M80.4 132.7L82.4 134.6M82.4 134.6L84.5 136.3M84.5 136.3L86.6 138.0M86.6 138.0L88.8 139.6M88.8 139.6L90.9 141.1M90.9 141.1L93.1 142.4M93.1 142.4L95.3 143.7M95.3 143.7L97.5 144.8M97.5 144.8L99.6 145.8M99.6 145.8L101.7 146.6M101.7 146.6L103.8 147.3M103.8 147.3L105.8 147.9M105.8 147.9L107.8 148.3M125.8 121.0L127.6 121.3M127.6 121.3L129.4 121.5M129.4 121.5L131.0 121.7M131.0 121.7L132.4 121.7M132.4 121.7L133.7 121.7M133.7 121.7L134.9 121.5M134.9 121.5L135.9 121.3M135.9 121.3L136.7 121.0M66.4 87.4L65.9 87.9M65.9 87.9L65.6 88.4M65.6 88.4L65.5 89.0M65.5 89.0L65.5 89.7M65.5 89.7L65.7 90.5M65.7 90.5L66.1 91.3M66.1 91.3L66.7 92.2M66.7 92.2L67.4 93.1M67.4 93.1L68.3 94.1M68.3 94.1L69.4 95.2M69.4 95.2L70.6 96.3M70.6 96.3L72.0 97.4M72.0 97.4L73.6 98.6M73.6 98.6L75.2 99.8M75.2 99.8L77.0 101.0M77.0 101.0L78.9 102.2M78.9 102.2L81.0 103.4M81.0 103.4L83.1 104.7M83.1 104.7L85.3 105.9M85.3 105.9L87.6 107.1M87.6 107.1L90.0 108.3M90.0 108.3L92.4 109.5M92.4 109.5L94.9 110.7M94.9 110.7L97.4 111.8M97.4 111.8L100.0 112.9M100.0 112.9L102.5 113.9M102.5 113.9L105.0 114.9M105.0 114.9L107.6 115.9M107.6 115.9L110.1 116.7M110.1 116.7L112.5 117.6M112.5 117.6L114.9 118.3M114.9 118.3L117.3 119.0M117.3 119.0L119.5 119.6M119.5 119.6L121.7 120.2M121.7 120.2L123.8 120.6M123.8 120.6L125.8 121.0M134.3 87.0L136.1 87.3M136.1 87.3L137.8 87.7M137.8 87.7L139.4 88.0M139.4 88.0L140.8 88.3M67.2 84.1L66.9 83.9M66.9 83.9L66.8 83.6M66.8 83.6L66.9 83.4M66.9 83.4L67.1 83.2M67.1 83.2L67.6 83.0M67.6 83.0L68.3 82.8M68.3 82.8L69.1 82.6M69.1 82.6L70.1 82.5M70.1 82.5L71.3 82.4M71.3 82.4L72.6 82.3M72.6 82.3L74.2 82.2M74.2 82.2L75.8 82.2M75.8 82.2L77.7 82.2M77.7 82.2L79.6 82.2M79.6 82.2L81.7 82.2M81.7 82.2L83.9 82.2M83.9 82.2L86.3 82.3M86.3 82.3L88.7 82.4M88.7 82.4L91.2 82.5M91.2 82.5L93.8 82.6M93.8 82.6L96.4 82.8M96.4 82.8L99.1 83.0M99.1 83.0L101.8 83.2M101.8 83.2L104.5 83.4M104.5 83.4L107.3 83.6M107.3 83.6L110.0 83.9M110.0 83.9L112.7 84.1M112.7 84.1L115.4 84.4M115.4 84.4L118.1 84.7M118.1 84.7L120.7 85.0M120.7 85.0L123.2 85.3M123.2 85.3L125.6 85.7M125.6 85.7L128.0 86.0M128.0 86.0L130.2 86.3M130.2 86.3L132.3 86.7M132.3 86.7L134.3 87.0M67.0 80.9L66.6 79.9M66.6 79.9L66.4 78.9M66.4 78.9L66.4 77.8M66.4 77.8L66.6 76.6M66.6 76.6L67.0 75.5M67.0 75.5L67.6 74.3M67.6 74.3L68.3 73.1M68.3 73.1L69.3 71.9M69.3 71.9L70.4 70.6M70.4 70.6L71.7 69.4M71.7 69.4L73.1 68.2M73.1 68.2L74.7 66.9M74.7 66.9L76.4 65.7M76.4 65.7L78.3 64.6M78.3 64.6L80.3 63.4M80.3 63.4L82.4 62.3M82.4 62.3L84.6 61.2M84.6 61.2L87.0 60.1M87.0 60.1L89.4 59.1M89.4 59.1L91.9 58.2M91.9 58.2L94.4 57.3M94.4 57.3L97.0 56.5M97.0 56.5L99.7 55.7M99.7 55.7L102.3 55.0M102.3 55.0L105.0 54.4M105.0 54.4L107.7 53.8M107.7 53.8L110.4 53.4M110.4 53.4L113.0 53.0M113.0 53.0L115.6 52.7M115.6 52.7L118.2 52.5M118.2 52.5L120.6 52.3M120.6 52.3L123.0 52.3M123.0 52.3L125.4 52.3M125.4 52.3L127.6 52.5M65.0 76.7L64.6 75.0M64.6 75.0L64.2 73.3M64.2 73.3L64.1 71.4M64.1 71.4L64.1 69.5M64.1 69.5L64.3 67.5M64.3 67.5L64.6 65.4M64.6 65.4L65.1 63.3M65.1 63.3L65.8 61.2M65.8 61.2L66.6 59.1M66.6 59.1L67.6 56.9M67.6 56.9L68.7 54.7M68.7 54.7L70.0 52.6M70.0 52.6L71.4 50.4M71.4 50.4L73.0 48.3M73.0 48.3L74.6 46.3M74.6 46.3L76.4 44.2M76.4 44.2L78.3 42.3M78.3 42.3L80.3 40.4M80.3 40.4L82.3 38.6M82.3 38.6L84.5 36.8M84.5 36.8L86.7 35.2M86.7 35.2L89.0 33.7M89.0 33.7L91.3 32.2M91.3 32.2L93.6 30.9M93.6 30.9L96.0 29.8M96.0 29.8L98.4 28.7M98.4 28.7L100.8 27.8M100.8 27.8L103.1 27.0M61.6 72.9L60.7 70.8M60.7 70.8L60.0 68.5M60.0 68.5L59.4 66.1M59.4 66.1L59.0 63.7M59.0 63.7L58.7 61.2M58.7 61.2L58.5 58.6M58.5 58.6L58.5 56.0M58.5 56.0L58.6 53.3M58.6 53.3L58.8 50.6M58.8 50.6L59.2 48.0M59.2 48.0L59.8 45.3M59.8 45.3L60.4 42.6M60.4 42.6L61.2 40.0M61.2 40.0L62.2 37.4M62.2 37.4L63.2 34.8M63.2 34.8L64.4 32.4M64.4 32.4L65.7 30.0M65.7 30.0L67.1 27.7M67.1 27.7L68.5 25.5M68.5 25.5L70.1 23.4M70.1 23.4L71.8 21.4M71.8 21.4L73.5 19.6M73.5 19.6L75.4 17.9M75.4 17.9L77.2 16.4"/><path stroke="#898f8c" stroke-opacity="0.85" stroke-width="1.8" d="M84.5 88.3L83.1 88.0M83.1 88.0L81.6 87.7M81.6 87.7L79.9 87.3M79.9 87.3L78.0 87.0M78.0 87.0L76.0 86.7M76.0 86.7L73.9 86.3M73.9 86.3L71.7 86.0M71.7 86.0L69.3 85.7M69.3 85.7L66.9 85.3M66.9 85.3L64.4 85.0M64.4 85.0L61.8 84.7M61.8 84.7L59.1 84.4M59.1 84.4L56.5 84.1M56.5 84.1L53.7 83.9M53.7 83.9L51.0 83.6M51.0 83.6L48.2 83.4M48.2 83.4L45.5 83.2M45.5 83.2L42.8 83.0M42.8 83.0L40.1 82.8M40.1 82.8L37.5 82.6M37.5 82.6L34.9 82.5M34.9 82.5L32.4 82.4M32.4 82.4L30.0 82.3M30.0 82.3L27.7 82.2M27.7 82.2L25.4 82.2M25.4 82.2L23.3 82.2M23.3 82.2L21.4 82.2M21.4 82.2L19.6 82.2M19.6 82.2L17.9 82.2M17.9 82.2L16.4 82.3M16.4 82.3L15.0 82.4M15.0 82.4L13.8 82.5M13.8 82.5L12.8 82.6M12.8 82.6L12.0 82.8M12.0 82.8L11.3 83.0M11.3 83.0L10.9 83.2M10.9 83.2L10.6 83.4M10.6 83.4L10.5 83.6M10.5 83.6L10.6 83.9M10.6 83.9L10.9 84.1M10.9 84.1L11.4 84.4M11.4 84.4L12.1 84.7M76.0 86.7L73.9 86.5M73.9 86.5L71.7 86.4M71.7 86.4L69.4 86.3M69.4 86.3L67.0 86.4M67.0 86.4L64.5 86.5M64.5 86.5L61.9 86.7M61.9 86.7L59.3 87.0M59.3 87.0L56.7 87.4M56.7 87.4L54.0 87.9M54.0 87.9L51.4 88.4M51.4 88.4L48.7 89.0M48.7 89.0L46.0 89.7M46.0 89.7L43.4 90.5M43.4 90.5L40.8 91.3M40.8 91.3L38.2 92.2M38.2 92.2L35.7 93.1M35.7 93.1L33.3 94.1M33.3 94.1L31.0 95.2M31.0 95.2L28.7 96.3M28.7 96.3L26.6 97.4M26.6 97.4L24.6 98.6M24.6 98.6L22.7 99.8M22.7 99.8L21.0 101.0M21.0 101.0L19.4 102.2M19.4 102.2L18.0 103.4M18.0 103.4L16.7 104.7M16.7 104.7L15.6 105.9M15.6 105.9L14.7 107.1M14.7 107.1L13.9 108.3M13.9 108.3L13.4 109.5M13.4 109.5L13.0 110.7M13.0 110.7L12.8 111.8M12.8 111.8L12.8 112.9M12.8 112.9L12.9 113.9M12.9 113.9L13.3 114.9M13.3 114.9L13.8 115.9M13.8 115.9L14.6 116.7M14.6 116.7L15.5 117.6M15.5 117.6L16.5 118.3M16.5 118.3L17.8 119.0M37.6 148.3L39.6 148.6M39.6 148.6L41.6 148.7M41.6 148.7L43.7 148.6M43.7 148.6L45.9 148.4M45.9 148.4L48.2 148.1M67.4 87.2L65.1 87.7M65.1 87.7L62.7 88.3M62.7 88.3L60.4 89.1M60.4 89.1L58.0 90.0M58.0 90.0L55.6 91.1M55.6 91.1L53.2 92.2M53.2 92.2L50.9 93.5M50.9 93.5L48.6 95.0M48.6 95.0L46.3 96.5M46.3 96.5L44.1 98.1M44.1 98.1L41.9 99.9M41.9 99.9L39.9 101.7M39.9 101.7L37.9 103.6M37.9 103.6L36.0 105.5M36.0 105.5L34.2 107.6M34.2 107.6L32.5 109.6M32.5 109.6L31.0 111.7M31.0 111.7L29.6 113.9M29.6 113.9L28.3 116.0M28.3 116.0L27.2 118.2M27.2 118.2L26.2 120.4M26.2 120.4L25.4 122.5M25.4 122.5L24.7 124.6M24.7 124.6L24.2 126.7M24.2 126.7L23.9 128.8M23.9 128.8L23.7 130.8M23.7 130.8L23.7 132.7M23.7 132.7L23.8 134.6M23.8 134.6L24.1 136.3M24.1 136.3L24.6 138.0M24.6 138.0L25.3 139.6M25.3 139.6L26.1 141.1M26.1 141.1L27.0 142.4M27.0 142.4L28.1 143.7M28.1 143.7L29.4 144.8M29.4 144.8L30.8 145.8M30.8 145.8L32.3 146.6M32.3 146.6L34.0 147.3M34.0 147.3L35.7 147.9M35.7 147.9L37.6 148.3M58.8 163.4L60.8 163.7M60.8 163.7L62.8 163.7M62.8 163.7L64.8 163.6M64.8 163.6L66.8 163.3M66.8 163.3L68.8 162.8M68.8 162.8L70.9 162.1M70.9 162.1L72.9 161.2M72.9 161.2L74.9 160.2M74.9 160.2L76.8 159.0M76.8 159.0L78.8 157.6M78.8 157.6L80.6 156.1M80.6 156.1L82.5 154.4M64.0 89.2L62.0 90.2M62.0 90.2L60.0 91.4M60.0 91.4L58.1 92.8M58.1 92.8L56.2 94.4M56.2 94.4L54.4 96.0M54.4 96.0L52.6 97.9M39.8 140.1L40.3 142.6M40.3 142.6L40.8 144.9M40.8 144.9L41.6 147.2M41.6 147.2L42.4 149.3M42.4 149.3L43.4 151.4M43.4 151.4L44.5 153.3M44.5 153.3L45.7 155.1M45.7 155.1L47.0 156.7M47.0 156.7L48.5 158.2M48.5 158.2L50.0 159.5M50.0 159.5L51.6 160.6M51.6 160.6L53.3 161.6M53.3 161.6L55.1 162.4M55.1 162.4L56.9 163.0M56.9 163.0L58.8 163.4M83.9 163.4L85.8 163.7M85.8 163.7L87.7 163.7M87.7 163.7L89.5 163.6M89.5 163.6L91.4 163.3M91.4 163.3L93.1 162.8M93.1 162.8L94.8 162.1M94.8 162.1L96.5 161.2M96.5 161.2L98.0 160.2M98.0 160.2L99.5 159.0M99.5 159.0L100.9 157.6M100.9 157.6L102.2 156.1M102.2 156.1L103.4 154.4M103.4 154.4L104.4 152.6M65.4 89.2L63.9 90.2M63.9 90.2L62.4 91.4M62.4 91.4L61.0 92.8M61.0 92.8L59.7 94.4M82.0 163.0L83.9 163.4M121.1 145.3L122.0 144.2M122.0 144.2L122.7 143.1M122.7 143.1L123.3 141.8M123.3 141.8L123.7 140.3M123.7 140.3L124.0 138.8M68.1 87.7L66.8 88.3M66.8 88.3L65.7 89.1M65.7 89.1L64.7 90.0M64.7 90.0L63.8 91.1M136.7 121.0L137.4 120.6M137.4 120.6L137.9 120.2M137.9 120.2L138.2 119.6M138.2 119.6L138.3 119.0M138.3 119.0L138.3 118.3M72.8 86.4L71.3 86.3M71.3 86.3L70.0 86.4M70.0 86.4L68.9 86.5M68.9 86.5L67.9 86.7M67.9 86.7L67.1 87.0M67.1 87.0L66.4 87.4M140.8 88.3L142.0 88.7M142.0 88.7L143.0 89.0M143.0 89.0L143.9 89.3M143.9 89.3L144.6 89.6M144.6 89.6L145.1 89.9M82.1 87.7L80.0 87.3M80.0 87.3L78.0 87.0M78.0 87.0L76.1 86.7M76.1 86.7L74.4 86.3M74.4 86.3L72.9 86.0M72.9 86.0L71.5 85.7M71.5 85.7L70.3 85.3M70.3 85.3L69.2 85.0M69.2 85.0L68.4 84.7M68.4 84.7L67.7 84.4M67.7 84.4L67.2 84.1M131.7 53.0L133.5 53.4M133.5 53.4L135.2 53.8M135.2 53.8L136.8 54.4M136.8 54.4L138.2 55.0M94.1 87.3L91.5 87.5M91.5 87.5L89.0 87.6M89.0 87.6L86.6 87.7M86.6 87.7L84.3 87.6M84.3 87.6L82.1 87.5M82.1 87.5L80.0 87.3M80.0 87.3L78.0 87.0M78.0 87.0L76.1 86.6M76.1 86.6L74.4 86.2M74.4 86.2L72.9 85.6M72.9 85.6L71.5 85.0M71.5 85.0L70.2 84.3M70.2 84.3L69.1 83.6M69.1 83.6L68.2 82.7M68.2 82.7L67.5 81.8M67.5 81.8L67.0 80.9M127.6 52.5L129.7 52.7M129.7 52.7L131.7 53.0M102.8 81.8L100.4 82.9M100.4 82.9L98.0 84.0M98.0 84.0L95.6 84.9M95.6 84.9L93.3 85.7M93.3 85.7L90.9 86.3M90.9 86.3L88.6 86.8M88.6 86.8L86.4 87.1M86.4 87.1L84.2 87.3M84.2 87.3L82.0 87.4M82.0 87.4L80.0 87.3M80.0 87.3L78.0 87.0M78.0 87.0L76.1 86.6M76.1 86.6L74.4 86.0M74.4 86.0L72.7 85.3M72.7 85.3L71.2 84.5M71.2 84.5L69.8 83.5M69.8 83.5L68.6 82.4M68.6 82.4L67.5 81.1M67.5 81.1L66.5 79.8M66.5 79.8L65.7 78.3M65.7 78.3L65.0 76.7M103.1 27.0L105.5 26.4M105.5 26.4L107.8 25.9M107.8 25.9L110.1 25.6M110.1 25.6L112.3 25.4M112.3 25.4L114.4 25.3M101.6 78.0L99.8 79.6M99.8 79.6L97.9 81.2M97.9 81.2L96.0 82.6M96.0 82.6L94.0 83.8M94.0 83.8L92.0 84.8M92.0 84.8L90.0 85.7M90.0 85.7L88.0 86.4M88.0 86.4L86.0 86.9M86.0 86.9L83.9 87.2M83.9 87.2L81.9 87.3M81.9 87.3L79.9 87.2M79.9 87.2L78.0 87.0M78.0 87.0L76.1 86.6M76.1 86.6L74.3 86.0M74.3 86.0L72.5 85.2M72.5 85.2L70.8 84.2M70.8 84.2L69.2 83.0M69.2 83.0L67.6 81.7M67.6 81.7L66.2 80.2M66.2 80.2L64.9 78.6M64.9 78.6L63.7 76.9M63.7 76.9L62.6 74.9M62.6 74.9L61.6 72.9M77.2 16.4L79.2 15.0M79.2 15.0L81.1 13.8M81.1 13.8L83.1 12.8M83.1 12.8L85.1 11.9M97.5 78.0L96.3 79.6M96.3 79.6L95.0 81.2M95.0 81.2L93.6 82.6M93.6 82.6L92.1 83.8M92.1 83.8L90.6 84.8M90.6 84.8L88.9 85.7M88.9 85.7L87.2 86.4M87.2 86.4L85.5 86.9M85.5 86.9L83.7 87.2M83.7 87.2L81.8 87.3M81.8 87.3L79.9 87.2M79.9 87.2L78.0 87.0M78.0 87.0L76.1 86.6M76.1 86.6L74.1 86.0M74.1 86.0L72.2 85.2M72.2 85.2L70.3 84.2M70.3 84.2L68.4 83.0M68.4 83.0L66.6 81.7M66.6 81.7L64.7 80.2M64.7 80.2L63.0 78.6M63.0 78.6L61.3 76.9M61.3 76.9L59.6 74.9M59.6 74.9L58.1 72.9M58.1 72.9L56.6 70.8M56.6 70.8L55.2 68.5M55.2 68.5L53.9 66.1M53.9 66.1L52.7 63.7M52.7 63.7L51.6 61.2M51.6 61.2L50.7 58.6M50.7 58.6L49.8 56.0M49.8 56.0L49.1 53.3M49.1 53.3L48.5 50.6M48.5 50.6L48.0 48.0M48.0 48.0L47.7 45.3M47.7 45.3L47.5 42.6M47.5 42.6L47.4 40.0M47.4 40.0L47.5 37.4M47.5 37.4L47.7 34.8M47.7 34.8L48.0 32.4M48.0 32.4L48.4 30.0M48.4 30.0L49.0 27.7M49.0 27.7L49.8 25.5M49.8 25.5L50.6 23.4M50.6 23.4L51.6 21.4M51.6 21.4L52.6 19.6M52.6 19.6L53.8 17.9M53.8 17.9L55.1 16.4M55.1 16.4L56.5 15.0M56.5 15.0L58.0 13.8M92.9 81.8L92.2 82.9M92.2 82.9L91.3 84.0M91.3 84.0L90.3 84.9M90.3 84.9L89.2 85.7M89.2 85.7L87.9 86.3M87.9 86.3L86.5 86.8M86.5 86.8L85.0 87.1M85.0 87.1L83.4 87.3M83.4 87.3L81.7 87.4M81.7 87.4L79.9 87.3M79.9 87.3L78.0 87.0M78.0 87.0L76.0 86.6M76.0 86.6L74.0 86.0M74.0 86.0L72.0 85.3M72.0 85.3L69.8 84.5M69.8 84.5L67.7 83.5M67.7 83.5L65.5 82.4M65.5 82.4L63.3 81.1M63.3 81.1L61.2 79.8M61.2 79.8L59.0 78.3M59.0 78.3L56.8 76.7M56.8 76.7L54.7 75.0M54.7 75.0L52.6 73.3M52.6 73.3L50.6 71.4M50.6 71.4L48.6 69.5M48.6 69.5L46.7 67.5M46.7 67.5L44.9 65.4M44.9 65.4L43.2 63.3M43.2 63.3L41.6 61.2M41.6 61.2L40.0 59.1M40.0 59.1L38.6 56.9M38.6 56.9L37.3 54.7M37.3 54.7L36.1 52.6M36.1 52.6L35.1 50.4M35.1 50.4L34.2 48.3M34.2 48.3L33.4 46.3M33.4 46.3L32.8 44.2M32.8 44.2L32.4 42.3M32.4 42.3L32.0 40.4M32.0 40.4L31.9 38.6M31.9 38.6L31.8 36.8M31.8 36.8L32.0 35.2M32.0 35.2L32.3 33.7M32.3 33.7L32.7 32.2M32.7 32.2L33.3 30.9M33.3 30.9L34.0 29.8M34.0 29.8L34.9 28.7M89.6 86.6L88.9 87.0M88.9 87.0L88.1 87.3M88.1 87.3L87.1 87.5M87.1 87.5L86.0 87.6M86.0 87.6L84.7 87.7M84.7 87.7L83.2 87.6M83.2 87.6L81.6 87.5M81.6 87.5L79.9 87.3M79.9 87.3L78.0 87.0M78.0 87.0L76.0 86.6M76.0 86.6L73.9 86.2M73.9 86.2L71.8 85.6M71.8 85.6L69.5 85.0M69.5 85.0L67.2 84.3M67.2 84.3L64.7 83.6M64.7 83.6L62.3 82.7M62.3 82.7L59.8 81.8M59.8 81.8L57.3 80.9M57.3 80.9L54.7 79.9M54.7 79.9L52.2 78.9M52.2 78.9L49.7 77.8M49.7 77.8L47.1 76.6M47.1 76.6L44.7 75.5M44.7 75.5L42.2 74.3M42.2 74.3L39.9 73.1M39.9 73.1L37.6 71.9M37.6 71.9L35.3 70.6M35.3 70.6L33.2 69.4M33.2 69.4L31.2 68.2M31.2 68.2L29.3 66.9M29.3 66.9L27.5 65.7M27.5 65.7L25.8 64.6M25.8 64.6L24.3 63.4M24.3 63.4L22.9 62.3M22.9 62.3L21.7 61.2M21.7 61.2L20.6 60.1M20.6 60.1L19.7 59.1M19.7 59.1L18.9 58.2M18.9 58.2L18.4 57.3M18.4 57.3L18.0 56.5M18.0 56.5L17.7 55.7M17.7 55.7L17.7 55.0M17.7 55.0L17.8 54.4M17.8 54.4L18.1 53.8M18.1 53.8L18.6 53.4M18.6 53.4L19.3 53.0M19.3 53.0L20.1 52.7"/><path stroke="#adb3b0" stroke-opacity="1.00" stroke-width="1.8" d="M21.7 87.0L23.7 87.3M23.7 87.3L25.8 87.7M89.1 90.1L88.8 89.9M88.8 89.9L88.3 89.6M88.3 89.6L87.6 89.3M87.6 89.3L86.8 89.0M86.8 89.0L85.7 88.7M85.7 88.7L84.5 88.3M12.1 84.7L13.0 85.0M13.0 85.0L14.0 85.3M14.0 85.3L15.2 85.7M15.2 85.7L16.6 86.0M16.6 86.0L18.2 86.3M18.2 86.3L19.9 86.7M19.9 86.7L21.7 87.0M24.3 121.0L26.3 121.3M26.3 121.3L28.4 121.5M28.4 121.5L30.6 121.7M30.6 121.7L33.0 121.7M33.0 121.7L35.4 121.7M35.4 121.7L37.8 121.5M37.8 121.5L40.4 121.3M40.4 121.3L43.0 121.0M85.8 89.7L84.5 89.0M84.5 89.0L83.1 88.4M83.1 88.4L81.6 87.8M81.6 87.8L79.9 87.4M79.9 87.4L78.0 87.0M78.0 87.0L76.0 86.7M17.8 119.0L19.2 119.6M19.2 119.6L20.8 120.2M20.8 120.2L22.5 120.6M22.5 120.6L24.3 121.0M48.2 148.1L50.5 147.6M50.5 147.6L52.9 147.0M52.9 147.0L55.2 146.2M55.2 146.2L57.6 145.3M57.6 145.3L60.0 144.2M60.0 144.2L62.4 143.1M62.4 143.1L64.7 141.8M64.7 141.8L67.0 140.3M78.0 87.0L76.0 86.7M76.0 86.7L74.0 86.6M74.0 86.6L71.8 86.7M71.8 86.7L69.6 86.9M69.6 86.9L67.4 87.2M82.5 154.4L84.2 152.6M84.2 152.6L85.9 150.6M85.9 150.6L87.5 148.5M87.5 148.5L88.9 146.3M72.1 86.8L70.0 87.1M70.0 87.1L68.0 87.6M68.0 87.6L66.0 88.3M66.0 88.3L64.0 89.2M104.4 152.6L105.4 150.6M105.4 150.6L106.2 148.5M106.2 148.5L107.0 146.3M107.0 146.3L107.6 144.0M72.3 86.8L70.5 87.1M70.5 87.1L68.8 87.6M68.8 87.6L67.1 88.3M67.1 88.3L65.4 89.2M124.0 138.8L124.2 137.2M124.2 137.2L124.1 135.4M124.1 135.4L124.0 133.6M124.0 133.6L123.6 131.7M76.1 86.7L74.3 86.6M74.3 86.6L72.6 86.7M72.6 86.7L71.0 86.9M71.0 86.9L69.5 87.2M69.5 87.2L68.1 87.7M138.3 118.3L138.0 117.5M138.0 117.5L137.6 116.7M137.6 116.7L137.1 115.8M137.1 115.8L136.3 114.9M136.3 114.9L135.4 113.9M82.1 87.8L80.0 87.4M80.0 87.4L78.0 87.0M78.0 87.0L76.1 86.7M76.1 86.7L74.4 86.5M74.4 86.5L72.8 86.4M145.1 89.9L145.4 90.1M145.4 90.1L145.5 90.4M145.5 90.4L145.4 90.6M145.4 90.6L145.1 90.8M145.1 90.8L144.7 91.0M144.7 91.0L144.0 91.2M96.9 89.6L94.2 89.3M94.2 89.3L91.6 89.0M91.6 89.0L89.1 88.7M89.1 88.7L86.7 88.3M86.7 88.3L84.3 88.0M84.3 88.0L82.1 87.7M138.2 55.0L139.5 55.7M139.5 55.7L140.5 56.4M140.5 56.4L141.4 57.3M141.4 57.3L142.2 58.1M142.2 58.1L142.7 59.1M142.7 59.1L143.1 60.1M110.0 84.3L107.3 85.0M107.3 85.0L104.6 85.6M104.6 85.6L102.0 86.1M102.0 86.1L99.3 86.6M99.3 86.6L96.7 87.0M96.7 87.0L94.1 87.3M118.4 25.7L120.3 26.1M120.3 26.1L122.0 26.7M122.0 26.7L123.7 27.4M114.1 74.1L111.9 75.9M111.9 75.9L109.7 77.5M109.7 77.5L107.4 79.0M107.4 79.0L105.1 80.5M105.1 80.5L102.8 81.8M114.4 25.3L116.4 25.4M116.4 25.4L118.4 25.7M108.1 69.9L106.6 72.1M106.6 72.1L105.0 74.2M105.0 74.2L103.4 76.1M103.4 76.1L101.6 78.0M85.1 11.9L87.2 11.2M87.2 11.2L89.2 10.7M89.2 10.7L91.2 10.4M91.2 10.4L93.2 10.3M101.1 69.9L100.3 72.1M100.3 72.1L99.5 74.2M99.5 74.2L98.5 76.1M98.5 76.1L97.5 78.0M58.0 13.8L59.5 12.8M59.5 12.8L61.2 11.9M61.2 11.9L62.9 11.2M62.9 11.2L64.6 10.7M94.4 75.9L94.2 77.5M94.2 77.5L94.0 79.0M94.0 79.0L93.5 80.5M93.5 80.5L92.9 81.8M34.9 28.7L35.9 27.8M35.9 27.8L37.1 27.0M37.1 27.0L38.3 26.4M38.3 26.4L39.7 25.9M39.7 25.9L41.2 25.6M90.5 84.3L90.5 85.0M90.5 85.0L90.4 85.6M90.4 85.6L90.1 86.1M90.1 86.1L89.6 86.6M20.1 52.7L21.1 52.5M21.1 52.5L22.3 52.3M22.3 52.3L23.6 52.3M23.6 52.3L25.0 52.3M25.0 52.3L26.6 52.5"/><path stroke="#d1d7d4" stroke-opacity="1.00" stroke-width="1.8" d="M25.8 87.7L28.0 88.0M28.0 88.0L30.4 88.3M30.4 88.3L32.8 88.7M32.8 88.7L35.3 89.0M35.3 89.0L37.9 89.3M37.9 89.3L40.6 89.6M86.9 91.4L87.7 91.2M87.7 91.2L88.4 91.0M88.4 91.0L88.9 90.8M88.9 90.8L89.1 90.6M89.1 90.6L89.2 90.4M89.2 90.4L89.1 90.1M43.0 121.0L45.6 120.6M45.6 120.6L48.3 120.2M48.3 120.2L51.0 119.6M51.0 119.6L53.7 119.0M53.7 119.0L56.3 118.3M56.3 118.3L59.0 117.5M59.0 117.5L61.6 116.7M89.6 95.1L89.4 94.1M89.4 94.1L89.0 93.1M89.0 93.1L88.5 92.2M88.5 92.2L87.8 91.3M87.8 91.3L86.9 90.4M86.9 90.4L85.8 89.7M67.0 140.3L69.3 138.8M69.3 138.8L71.5 137.2M71.5 137.2L73.7 135.4M73.7 135.4L75.7 133.6M75.7 133.6L77.7 131.7M77.7 131.7L79.6 129.8M87.4 91.6L86.2 90.5M86.2 90.5L84.8 89.5M84.8 89.5L83.3 88.7M83.3 88.7L81.6 88.0M81.6 88.0L79.9 87.4M79.9 87.4L78.0 87.0M88.9 146.3L90.3 144.0M90.3 144.0L91.6 141.6M91.6 141.6L92.8 139.2M92.8 139.2L93.8 136.6M93.8 136.6L94.8 134.0M83.5 88.8L81.7 88.0M81.7 88.0L79.9 87.4M79.9 87.4L78.0 87.0M78.0 87.0L76.1 86.8M76.1 86.8L74.1 86.7M74.1 86.7L72.1 86.8M107.6 144.0L108.0 141.6M108.0 141.6L108.3 139.2M108.3 139.2L108.5 136.6M108.5 136.6L108.6 134.0M108.6 134.0L108.5 131.4M81.9 88.0L79.9 87.4M79.9 87.4L78.0 87.0M78.0 87.0L76.1 86.8M76.1 86.8L74.2 86.7M74.2 86.7L72.3 86.8M123.6 131.7L123.2 129.8M123.2 129.8L122.6 127.7M122.6 127.7L121.8 125.7M121.8 125.7L120.9 123.6M120.9 123.6L119.9 121.4M119.9 121.4L118.7 119.3M86.2 89.5L84.0 88.7M84.0 88.7L82.0 88.0M82.0 88.0L80.0 87.4M80.0 87.4L78.0 87.0M78.0 87.0L76.1 86.7M135.4 113.9L134.3 112.8M134.3 112.8L133.1 111.7M133.1 111.7L131.7 110.6M131.7 110.6L130.2 109.4M130.2 109.4L128.5 108.3M128.5 108.3L126.7 107.1M126.7 107.1L124.8 105.8M101.3 94.1L98.7 93.1M98.7 93.1L96.2 92.2M96.2 92.2L93.7 91.3M93.7 91.3L91.3 90.4M91.3 90.4L88.8 89.7M88.8 89.7L86.5 89.0M86.5 89.0L84.2 88.4M84.2 88.4L82.1 87.8M144.0 91.2L143.2 91.4M143.2 91.4L142.2 91.5M142.2 91.5L141.0 91.6M141.0 91.6L139.6 91.7M139.6 91.7L138.1 91.8M138.1 91.8L136.4 91.8M136.4 91.8L134.6 91.8M134.6 91.8L132.7 91.8M132.7 91.8L130.6 91.8M130.6 91.8L128.3 91.8M128.3 91.8L126.0 91.7M126.0 91.7L123.6 91.6M123.6 91.6L121.1 91.5M121.1 91.5L118.5 91.4M118.5 91.4L115.9 91.2M115.9 91.2L113.2 91.0M113.2 91.0L110.5 90.8M110.5 90.8L107.8 90.6M107.8 90.6L105.0 90.4M105.0 90.4L102.3 90.1M102.3 90.1L99.5 89.9M99.5 89.9L96.9 89.6M143.1 60.1L143.2 61.1M143.2 61.1L143.2 62.2M143.2 62.2L143.0 63.3M143.0 63.3L142.6 64.5M142.6 64.5L142.1 65.7M142.1 65.7L141.3 66.9M141.3 66.9L140.4 68.1M140.4 68.1L139.3 69.3M139.3 69.3L138.0 70.6M138.0 70.6L136.6 71.8M136.6 71.8L135.0 73.0M135.0 73.0L133.3 74.2M133.3 74.2L131.4 75.4M131.4 75.4L129.4 76.6M129.4 76.6L127.3 77.7M127.3 77.7L125.0 78.8M125.0 78.8L122.7 79.9M122.7 79.9L120.3 80.9M120.3 80.9L117.8 81.8M117.8 81.8L115.2 82.7M115.2 82.7L112.6 83.5M112.6 83.5L110.0 84.3M123.7 27.4L125.2 28.2M125.2 28.2L126.6 29.2M126.6 29.2L127.9 30.3M127.9 30.3L129.0 31.6M129.0 31.6L129.9 32.9M129.9 32.9L130.7 34.4M130.7 34.4L131.4 36.0M126.4 60.1L125.0 62.3M125.0 62.3L123.5 64.4M123.5 64.4L121.8 66.4M121.8 66.4L120.0 68.5M120.0 68.5L118.1 70.4M118.1 70.4L116.1 72.3M116.1 72.3L114.1 74.1M97.2 10.6L99.1 11.0M99.1 11.0L100.9 11.6M100.9 11.6L102.7 12.4M114.7 55.0L113.9 57.6M113.9 57.6L113.0 60.2M113.0 60.2L112.0 62.7M112.0 62.7L110.8 65.2M110.8 65.2L109.5 67.6M109.5 67.6L108.1 69.9M93.2 10.3L95.2 10.3M95.2 10.3L97.2 10.6M102.7 57.6L102.7 60.2M102.7 60.2L102.5 62.7M102.5 62.7L102.1 65.2M102.1 65.2L101.7 67.6M101.7 67.6L101.1 69.9M64.6 10.7L66.5 10.4M66.5 10.4L68.3 10.3M68.3 10.3L70.2 10.3M70.2 10.3L72.1 10.6M92.8 66.4L93.4 68.5M93.4 68.5L93.9 70.4M93.9 70.4L94.2 72.3M94.2 72.3L94.4 74.1M94.4 74.1L94.4 75.9M41.2 25.6L42.8 25.4M42.8 25.4L44.5 25.3M44.5 25.3L46.3 25.4M46.3 25.4L48.2 25.7M30.2 53.0L32.2 53.4M32.2 53.4L34.3 53.8M34.3 53.8L36.5 54.4M87.7 79.9L88.6 80.9M88.6 80.9L89.3 81.8M89.3 81.8L89.9 82.7M89.9 82.7L90.3 83.5M90.3 83.5L90.5 84.3M26.6 52.5L28.4 52.7M28.4 52.7L30.2 53.0"/><path stroke="#f5fbf8" stroke-opacity="1.00" stroke-width="1.8" d="M40.6 89.6L43.3 89.9M43.3 89.9L46.0 90.1M46.0 90.1L48.7 90.4M48.7 90.4L51.5 90.6M51.5 90.6L54.2 90.8M54.2 90.8L56.9 91.0M56.9 91.0L59.6 91.2M59.6 91.2L62.2 91.4M62.2 91.4L64.8 91.5M64.8 91.5L67.3 91.6M67.3 91.6L69.7 91.7M69.7 91.7L72.1 91.8M72.1 91.8L74.3 91.8M74.3 91.8L76.4 91.8M76.4 91.8L78.3 91.8M78.3 91.8L80.2 91.8M80.2 91.8L81.8 91.8M81.8 91.8L83.4 91.7M83.4 91.7L84.7 91.6M84.7 91.6L85.9 91.5M85.9 91.5L86.9 91.4M61.6 116.7L64.1 115.8M64.1 115.8L66.6 114.9M66.6 114.9L69.0 113.9M69.0 113.9L71.4 112.8M71.4 112.8L73.6 111.7M73.6 111.7L75.7 110.6M75.7 110.6L77.7 109.4M77.7 109.4L79.6 108.3M79.6 108.3L81.3 107.1M81.3 107.1L82.9 105.8M82.9 105.8L84.3 104.6M84.3 104.6L85.6 103.4M85.6 103.4L86.7 102.1M86.7 102.1L87.7 100.9M87.7 100.9L88.4 99.7M88.4 99.7L89.0 98.5M89.0 98.5L89.4 97.4M89.4 97.4L89.6 96.2M89.6 96.2L89.6 95.1M79.6 129.8L81.4 127.7M81.4 127.7L83.0 125.7M83.0 125.7L84.6 123.6M84.6 123.6L86.0 121.4M86.0 121.4L87.3 119.3M87.3 119.3L88.4 117.1M88.4 117.1L89.4 114.9M89.4 114.9L90.2 112.8M90.2 112.8L90.9 110.7M90.9 110.7L91.4 108.6M91.4 108.6L91.7 106.5M91.7 106.5L91.9 104.5M91.9 104.5L91.9 102.6M91.9 102.6L91.8 100.7M91.8 100.7L91.4 99.0M91.4 99.0L91.0 97.3M91.0 97.3L90.3 95.7M90.3 95.7L89.5 94.2M89.5 94.2L88.5 92.9M88.5 92.9L87.4 91.6M94.8 134.0L95.6 131.4M95.6 131.4L96.2 128.7M96.2 128.7L96.8 126.0M96.8 126.0L97.2 123.4M97.2 123.4L97.4 120.7M97.4 120.7L97.5 118.0M97.5 118.0L97.5 115.4M97.5 115.4L97.3 112.8M97.3 112.8L97.0 110.3M97.0 110.3L96.6 107.9M96.6 107.9L96.0 105.5M96.0 105.5L95.3 103.2M95.3 103.2L94.4 101.1M94.4 101.1L93.4 99.1M93.4 99.1L92.3 97.1M92.3 97.1L91.1 95.4M91.1 95.4L89.8 93.8M89.8 93.8L88.4 92.3M88.4 92.3L86.8 91.0M86.8 91.0L85.2 89.8M85.2 89.8L83.5 88.8M108.5 131.4L108.3 128.7M108.3 128.7L108.0 126.0M108.0 126.0L107.5 123.4M107.5 123.4L106.9 120.7M106.9 120.7L106.2 118.0M106.2 118.0L105.3 115.4M105.3 115.4L104.4 112.8M104.4 112.8L103.3 110.3M103.3 110.3L102.1 107.9M102.1 107.9L100.8 105.5M100.8 105.5L99.4 103.2M99.4 103.2L97.9 101.1M97.9 101.1L96.4 99.1M96.4 99.1L94.7 97.1M94.7 97.1L93.0 95.4M93.0 95.4L91.3 93.8M91.3 93.8L89.4 92.3M89.4 92.3L87.6 91.0M87.6 91.0L85.7 89.8M85.7 89.8L83.8 88.8M83.8 88.8L81.9 88.0M118.7 119.3L117.4 117.1M117.4 117.1L116.0 114.9M116.0 114.9L114.4 112.8M114.4 112.8L112.8 110.7M112.8 110.7L111.1 108.6M111.1 108.6L109.3 106.5M109.3 106.5L107.4 104.5M107.4 104.5L105.4 102.6M105.4 102.6L103.4 100.7M103.4 100.7L101.3 99.0M101.3 99.0L99.2 97.3M99.2 97.3L97.0 95.7M97.0 95.7L94.8 94.2M94.8 94.2L92.7 92.9M92.7 92.9L90.5 91.6M90.5 91.6L88.3 90.5M88.3 90.5L86.2 89.5M124.8 105.8L122.8 104.6M122.8 104.6L120.7 103.4M120.7 103.4L118.4 102.1M118.4 102.1L116.1 100.9M116.1 100.9L113.8 99.7M113.8 99.7L111.3 98.5M111.3 98.5L108.9 97.4M108.9 97.4L106.3 96.2M106.3 96.2L103.8 95.1M103.8 95.1L101.3 94.1M131.4 36.0L131.9 37.7M131.9 37.7L132.2 39.4M132.2 39.4L132.3 41.3M132.3 41.3L132.3 43.2M132.3 43.2L132.1 45.2M132.1 45.2L131.8 47.3M131.8 47.3L131.3 49.4M131.3 49.4L130.6 51.5M130.6 51.5L129.8 53.6M129.8 53.6L128.8 55.8M128.8 55.8L127.7 58.0M127.7 58.0L126.4 60.1M102.7 12.4L104.4 13.4M104.4 13.4L106.0 14.5M106.0 14.5L107.5 15.8M107.5 15.8L109.0 17.3M109.0 17.3L110.3 18.9M110.3 18.9L111.5 20.7M111.5 20.7L112.6 22.6M112.6 22.6L113.6 24.7M113.6 24.7L114.4 26.8M114.4 26.8L115.2 29.1M115.2 29.1L115.7 31.4M115.7 31.4L116.2 33.9M116.2 33.9L116.5 36.4M116.5 36.4L116.7 39.0M116.7 39.0L116.7 41.6M116.7 41.6L116.6 44.2M116.6 44.2L116.3 46.9M116.3 46.9L115.9 49.6M115.9 49.6L115.4 52.3M115.4 52.3L114.7 55.0M72.1 10.6L74.0 11.0M74.0 11.0L76.0 11.6M76.0 11.6L77.9 12.4M77.9 12.4L79.8 13.4M79.8 13.4L81.7 14.5M81.7 14.5L83.6 15.8M83.6 15.8L85.4 17.3M85.4 17.3L87.1 18.9M87.1 18.9L88.8 20.7M88.8 20.7L90.5 22.6M90.5 22.6L92.0 24.7M92.0 24.7L93.5 26.8M93.5 26.8L94.9 29.1M94.9 29.1L96.2 31.4M96.2 31.4L97.4 33.9M97.4 33.9L98.5 36.4M98.5 36.4L99.5 39.0M99.5 39.0L100.3 41.6M100.3 41.6L101.0 44.2M101.0 44.2L101.6 46.9M101.6 46.9L102.1 49.6M102.1 49.6L102.4 52.3M102.4 52.3L102.6 55.0M102.6 55.0L102.7 57.6M48.2 25.7L50.2 26.1M50.2 26.1L52.2 26.7M52.2 26.7L54.3 27.4M54.3 27.4L56.4 28.2M56.4 28.2L58.5 29.2M58.5 29.2L60.7 30.3M60.7 30.3L62.9 31.6M62.9 31.6L65.1 32.9M65.1 32.9L67.2 34.4M67.2 34.4L69.4 36.0M69.4 36.0L71.5 37.7M71.5 37.7L73.6 39.4M73.6 39.4L75.6 41.3M75.6 41.3L77.6 43.2M77.6 43.2L79.5 45.2M79.5 45.2L81.3 47.3M81.3 47.3L83.0 49.4M83.0 49.4L84.7 51.5M84.7 51.5L86.2 53.6M86.2 53.6L87.6 55.8M87.6 55.8L88.9 58.0M88.9 58.0L90.1 60.1M90.1 60.1L91.1 62.3M91.1 62.3L92.0 64.4M92.0 64.4L92.8 66.4M36.5 54.4L38.7 55.0M38.7 55.0L41.1 55.7M41.1 55.7L43.5 56.4M43.5 56.4L45.9 57.3M45.9 57.3L48.4 58.1M48.4 58.1L51.0 59.1M51.0 59.1L53.5 60.1M53.5 60.1L56.0 61.1M56.0 61.1L58.6 62.2M58.6 62.2L61.1 63.3M61.1 63.3L63.6 64.5M63.6 64.5L66.0 65.7M66.0 65.7L68.4 66.9M68.4 66.9L70.7 68.1M70.7 68.1L72.9 69.3M72.9 69.3L75.0 70.6M75.0 70.6L77.1 71.8M77.1 71.8L79.0 73.0M79.0 73.0L80.8 74.2M80.8 74.2L82.4 75.4M82.4 75.4L84.0 76.6M84.0 76.6L85.4 77.7M85.4 77.7L86.6 78.8M86.6 78.8L87.7 79.9"/></g></svg>
<div class="abs muted" style="left:194px;top:458px;font-size:13px;letter-spacing:0.6px">VIEW ORIGINAL</div>

<div class="abs muted" style="left:385px;top:259px;font-size:13px;letter-spacing:0.8px">METAPLEX NFT</div>
<div class="abs" style="left:384px;top:286.6px;font-size:26.5px;letter-spacing:-0.22px;color:#fafafa">My Collection</div>
<div class="badge" style="left:551px;top:288px;width:117px;height:25px"></div>
<div class="abs" style="left:559px;top:291.9px;font-size:15.5px">Master Edition</div>
<div class="abs muted" style="left:385px;top:319.8px;font-size:19.9px;letter-spacing:0.65px">NO SYMBOL WAS FOUND</div>

<div class="badge" style="left:381px;top:358px;width:121px;height:25px"></div>
<div class="abs" style="left:388px;top:361.9px;font-size:15.5px">Primary Market</div>
<svg class="abs" style="left:510px;top:362px" width="17" height="17" viewBox="0 0 24 24" fill="none" stroke="#ffffff" stroke-width="2.1" stroke-linecap="round" stroke-linejoin="round"><circle cx="12" cy="12" r="10"/><path d="M9.09 9a3 3 0 0 1 5.83 1c0 2-3 3-3 3"/><line x1="12" y1="17" x2="12.01" y2="17"/></svg>
<div class="badge" style="left:381px;top:395px;width:71px;height:26px"></div>
<div class="abs" style="left:388px;top:398.9px;font-size:15.5px">Mutable</div>

<div class="abs" style="left:381px;top:437px;width:200px;height:38px;background:#1c4d3f;border-radius:5px 0 0 5px"></div>
<div class="abs" style="left:434px;top:448px;font-size:17.5px;letter-spacing:0.14px">Creators</div>
<svg class="abs" style="left:510px;top:451px" width="14" height="10" viewBox="0 0 14 10" fill="none" stroke="#ffffff" stroke-width="1.6" stroke-linecap="round" stroke-linejoin="round"><polyline points="2,2.5 7,7.5 12,2.5"/></svg>

<div class="abs" style="left:141px;top:523px;width:1487px;height:1px;background:#282d2b"></div>

<!-- Overview card -->
<div id="card"></div>
<div class="abs" style="left:174px;top:596px;font-size:22px">Overview</div>
<div class="abs" style="left:1484px;top:588px;width:112px;height:38px;border:1px solid #3b4240;border-radius:5px"></div>
<svg class="abs" style="left:1495.3px;top:596.7px" width="17.3" height="17.3" viewBox="0 0 24 24" fill="none" stroke="#ffffff" stroke-width="2" stroke-linecap="round" stroke-linejoin="round"><polyline points="23 4 23 10 17 10"/><polyline points="1 20 1 14 7 14"/><path d="M3.51 9a9 9 0 0 1 14.85-3.36L23 10M1 14l4.64 4.36A9 9 0 0 0 20.49 15"/></svg>
<div class="abs" style="left:1521px;top:599.3px;font-size:17.3px;letter-spacing:0.3px">Refresh</div>

<div class="rowb" style="top:647px"></div>
<div class="rowb" style="top:717px"></div>
<div class="rowb" style="top:787px"></div>
<div class="rowb" style="top:856px"></div>
<div class="rowb" style="top:926px"></div>
<div class="rowb" style="top:996px"></div>
<div class="rowb" style="top:1065px"></div>

<div class="abs lbl lbl2" style="left:174px;top:674.3px;letter-spacing:0.317px">Address</div>
<div class="abs lbl lbl2" style="left:174px;top:743.3px;letter-spacing:0.320px">Max Total Supply</div>
<div class="abs lbl lbl2" style="left:174px;top:813.3px;letter-spacing:0.546px">Current Supply</div>
<div class="abs lbl lbl2" style="left:174px;top:883.3px;letter-spacing:0.854px">Mint Authority</div>
<div class="abs lbl lbl2" style="left:174px;top:952.3px;letter-spacing:0.607px">Freeze Authority</div>
<div class="abs lbl lbl2" style="left:174px;top:1022.3px;letter-spacing:0.767px">Update Authority</div>
<div class="abs lbl lbl2" style="left:174px;top:1092.3px;letter-spacing:-0.033px">Seller Fee</div>

<div id="vals">
<div class="abs mono" style="right:154px;top:673.9px">D2zi1QQmtZR5fk7wpA1Fmf6hTY2xy8xVMyNgfq6LsKy1</div>
<svg class="abs" style="left:1112px;top:670.0px" width="19" height="19" viewBox="0 0 19 19" fill="none" stroke="#ffffff" stroke-width="1.5" stroke-linecap="round"><path d="M11.9,6 V5.6 Q11.9,3.6 9.9,3.6 H4.6 Q2.6,3.6 2.6,5.6 V10.9 Q2.6,12.9 4.6,12.9 H4.9"/><rect x="7.6" y="8.6" width="9.6" height="9.4" rx="2"/></svg>
<div class="abs lbl lbl2" style="right:154px;top:743.1px">1</div>
<div class="abs lbl lbl2" style="right:154px;top:812.8px">1</div>
<div class="abs mono grn" style="right:154px;top:883.0px">7cuA6p9mXwaYoM9kxKgNy41NMw5NJFQ5Yezo5TerbVD9</div>
<svg class="abs" style="left:1112px;top:878.5px" width="19" height="19" viewBox="0 0 19 19" fill="none" stroke="#ffffff" stroke-width="1.5" stroke-linecap="round"><path d="M11.9,6 V5.6 Q11.9,3.6 9.9,3.6 H4.6 Q2.6,3.6 2.6,5.6 V10.9 Q2.6,12.9 4.6,12.9 H4.9"/><rect x="7.6" y="8.6" width="9.6" height="9.4" rx="2"/></svg>
<div class="abs mono grn" style="right:154px;top:952.7px">7cuA6p9mXwaYoM9kxKgNy41NMw5NJFQ5Yezo5TerbVD9</div>
<svg class="abs" style="left:1112px;top:948px" width="19" height="19" viewBox="0 0 19 19" fill="none" stroke="#ffffff" stroke-width="1.5" stroke-linecap="round"><path d="M11.9,6 V5.6 Q11.9,3.6 9.9,3.6 H4.6 Q2.6,3.6 2.6,5.6 V10.9 Q2.6,12.9 4.6,12.9 H4.9"/><rect x="7.6" y="8.6" width="9.6" height="9.4" rx="2"/></svg>
<div class="abs mono grn" style="right:154px;top:1022.4px">4kg8oh3jdNtn7j2wcS7TrUua31AgbLzDVkBZgTAe44aF</div>
<svg class="abs" style="left:1112px;top:1017.5px" width="19" height="19" viewBox="0 0 19 19" fill="none" stroke="#ffffff" stroke-width="1.5" stroke-linecap="round"><path d="M11.9,6 V5.6 Q11.9,3.6 9.9,3.6 H4.6 Q2.6,3.6 2.6,5.6 V10.9 Q2.6,12.9 4.6,12.9 H4.9"/><rect x="7.6" y="8.6" width="9.6" height="9.4" rx="2"/></svg>
<div class="abs lbl lbl2" style="right:154px;top:1091.9px">0%</div>
</div>
</body>
</html>
